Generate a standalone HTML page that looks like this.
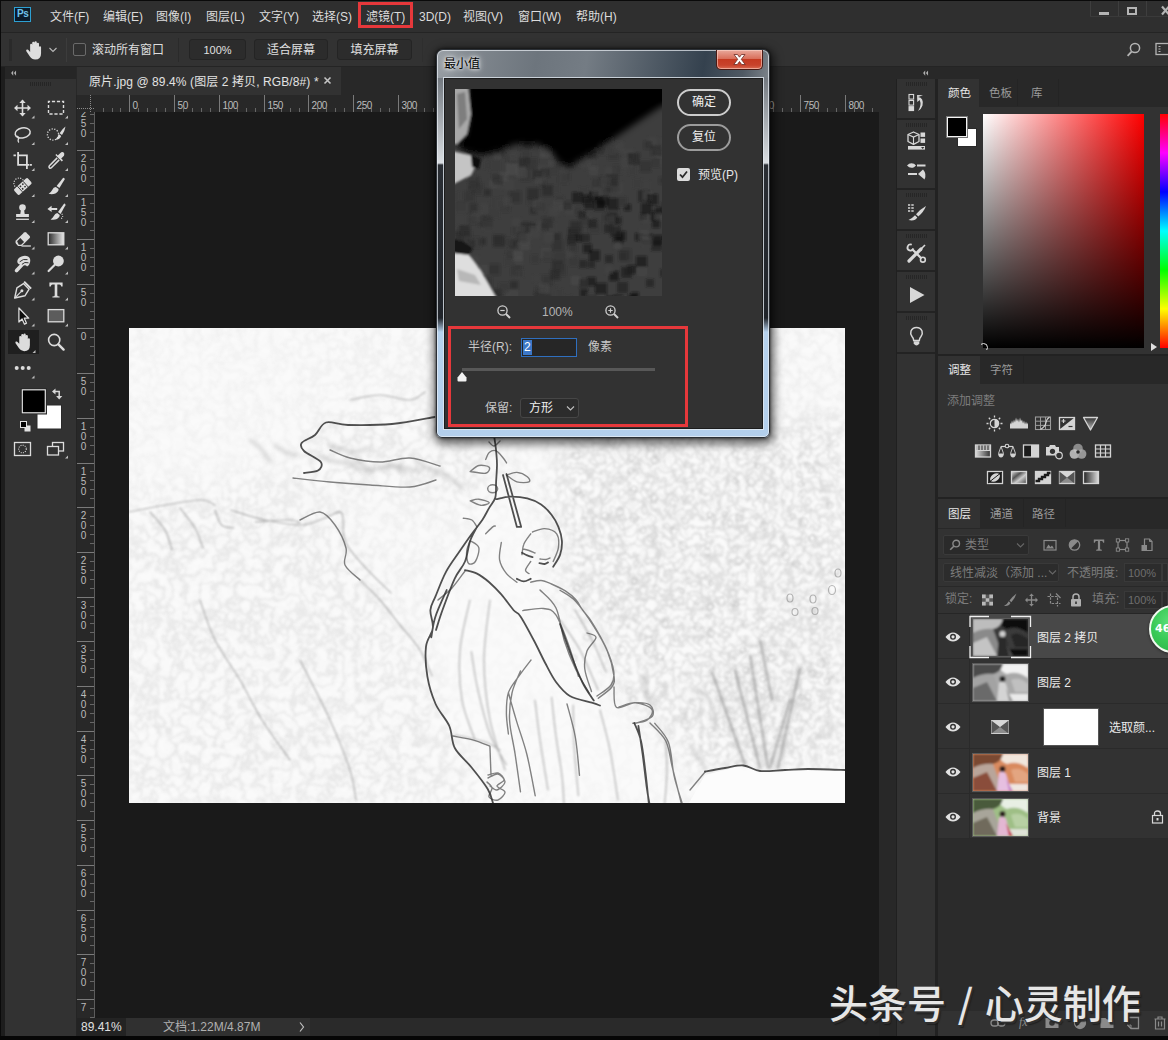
<!DOCTYPE html>
<html lang="zh-CN">
<head>
<meta charset="utf-8">
<title>最小值</title>
<style>
*{box-sizing:border-box;margin:0;padding:0}
html,body{width:1168px;height:1040px;overflow:hidden;background:#242424}
body{position:relative;font-family:"Liberation Sans","Noto Sans CJK SC",sans-serif;font-size:12px;color:#d6d6d6}
.a{position:absolute}
.t{position:absolute;white-space:nowrap;line-height:1}
#menubar{left:1px;top:1px;width:1167px;height:31px;background:#2f2f2f}
#optbar{left:1px;top:33px;width:1167px;height:33px;background:#323232}
#tabrow{left:1px;top:67px;width:1167px;height:28px;background:#282828}
#toolbar{left:5px;top:79px;width:71px;height:957px;background:#323232}
#canvas{left:94px;top:112px;width:785px;height:906px;background:#1a1a1a}
#hruler{left:77px;top:95px;width:802px;height:17px;background:#282828}
#vruler{left:77px;top:112px;width:17px;height:906px;background:#282828}
#status{left:77px;top:1018px;width:802px;height:18px;background:#2a2a2a}
#gapstrip{left:879px;top:95px;width:17px;height:941px;background:#282828}
#iconstrip{left:897px;top:79px;width:38px;height:957px;background:#323232}
#panels{left:938px;top:79px;width:230px;height:957px;background:#323232}
.mi{top:11px;font-size:12px;color:#dcdcdc}
.btn{position:absolute;height:21px;border:1px solid #242424;border-radius:3px;background:#2c2c2c;color:#e0e0e0;font-size:12px;line-height:19px;padding-top:1px;text-align:center;white-space:nowrap}

</style>
</head>
<body>
<!-- app chrome -->
<div class="a" style="left:0;top:0;width:1168px;height:1px;background:#0a0a0a"></div><div class="a" style="left:0;top:0;width:1px;height:1040px;background:#0a0a0a"></div><div class="a" style="left:0;top:1036px;width:1168px;height:4px;background:#060606"></div>
<div class="a" id="menubar"></div>
<div class="a" id="optbar"></div>
<div class="a" id="tabrow"></div>
<div class="a" id="toolbar"></div>
<div class="a" id="hruler"></div>
<div class="a" id="vruler"></div>
<div class="a" id="canvas"></div>
<div class="a" id="status"></div>
<div class="a" id="gapstrip"></div>
<div class="a" id="iconstrip"></div>
<div class="a" id="panels"></div>

<!-- MENU -->
<div class="a" style="left:14px;top:7px;width:17px;height:15px;background:#0b1b2b;border:1px solid #2da0d2"></div>
<span class="t" style="left:17px;top:9px;font-size:10px;font-weight:bold;color:#6fc3ea;letter-spacing:-0.3px">Ps</span>
<div class="a" style="left:1090px;top:1px;width:1px;height:16px;background:#3e3e3e"></div><div class="a" style="left:1118px;top:1px;width:1px;height:16px;background:#3e3e3e"></div><div class="a" style="left:1146px;top:1px;width:1px;height:16px;background:#3e3e3e"></div><div class="a" style="left:1090px;top:16px;width:78px;height:1px;background:#3a3a3a"></div>
<div class="a" style="left:1099px;top:12px;width:10px;height:3px;background:#b4b4b4"></div>
<div class="a" style="left:1127px;top:7px;width:10px;height:8px;border:2px solid #b4b4b4;border-top-width:2px"></div>
<svg class="a" style="left:1160px;top:5px" width="8" height="11" viewBox="0 0 8 11"><path d="M2 1.500L9 9.500M9 1.500L2 9.500" stroke="#b4b4b4" stroke-width="2.200"/></svg>
<div id="menu">
<span class="t mi" style="left:50px">文件(F)</span>
<span class="t mi" style="left:103px">编辑(E)</span>
<span class="t mi" style="left:156px">图像(I)</span>
<span class="t mi" style="left:206px">图层(L)</span>
<span class="t mi" style="left:259px">文字(Y)</span>
<span class="t mi" style="left:312px">选择(S)</span>
<span class="t mi" style="left:366px">滤镜(T)</span>
<span class="t mi" style="left:419px">3D(D)</span>
<span class="t mi" style="left:463px">视图(V)</span>
<span class="t mi" style="left:518px">窗口(W)</span>
<span class="t mi" style="left:576px">帮助(H)</span>
</div>
<div class="a" style="left:358px;top:2px;width:55px;height:26px;border:3px solid #e6383b"></div>
<!--OPT-->
<div id="opt">
<div class="a" style="left:9px;top:39px;width:3px;height:22px;background:#2a2a2a"></div>
<svg class="a" style="left:23px;top:39px" width="23" height="23" viewBox="0 0 20 20"><path d="M6.2 11.2 L6.2 5.2 Q6.2 4.2 7.1 4.2 Q8 4.2 8 5.2 L8 3.4 Q8 2.3 9 2.3 Q10 2.3 10 3.4 L10 3 Q10 2 11 2 Q12 2 12 3 L12 4 Q12 3.2 12.9 3.2 Q13.9 3.2 13.9 4.2 L13.9 7 Q13.9 6.2 14.8 6.2 Q15.7 6.2 15.7 7.2 L15.7 12.5 Q15.7 17.8 10.6 17.8 Q7.6 17.8 6 15.2 L2.9 10.6 Q2.4 9.6 3.3 9.2 Q4.2 8.8 4.9 9.7 Z" fill="#dedede"/></svg>
<svg class="a" style="left:48px;top:46px" width="10" height="8" viewBox="0 0 10 8"><path d="M1.5 2 L5 5.5 L8.5 2" fill="none" stroke="#b8b8b8" stroke-width="1.1"/></svg>
<div class="a" style="left:66px;top:38px;width:1px;height:24px;background:#3c3c3c"></div>
<div class="a" style="left:73px;top:43px;width:13px;height:13px;border:1px solid #6a6a6a;border-radius:2px;background:#303030"></div>
<span class="t" style="left:92px;top:44px;font-size:12px;color:#dedede">滚动所有窗口</span>
<div class="a" style="left:178px;top:38px;width:1px;height:24px;background:#2a2a2a"></div>
<div class="btn" style="left:189px;top:39px;width:57px;font-size:11px">100%</div>
<div class="btn" style="left:254px;top:39px;width:74px">适合屏幕</div>
<div class="btn" style="left:337px;top:39px;width:75px">填充屏幕</div>
<div class="a" style="left:422px;top:38px;width:1px;height:24px;background:#2e2e2e"></div>
<svg class="a" style="left:1125px;top:41px" width="18" height="18" viewBox="0 0 18 18"><circle cx="10" cy="7" r="4.6" fill="none" stroke="#b4b4b4" stroke-width="1.5"/><path d="M6.6 10.6 L2.6 14.8" stroke="#b4b4b4" stroke-width="1.8"/></svg>
<svg class="a" style="left:1155px;top:42px" width="13" height="14" viewBox="0 0 13 14"><rect x="1" y="1.5" width="14" height="11" fill="none" stroke="#b4b4b4" stroke-width="1.3"/><path d="M3.5 4.5h2M3.5 7h2M3.5 9.5h2" stroke="#b4b4b4" stroke-width="1.2"/></svg>
</div>
<!--TAB-->
<div class="a" style="left:77px;top:67px;width:264px;height:28px;background:#323232"></div>
<span class="t" style="left:89px;top:76px;font-size:12px;color:#e2e2e2;letter-spacing:0.1px">原片.jpg @ 89.4% (图层 2 拷贝, RGB/8#) *</span>
<svg class="a" style="left:323px;top:76px" width="9" height="9" viewBox="0 0 9 9"><path d="M1.5 1.500 L7.500 7.500 M7.500 1.500 L1.500 7.500" stroke="#c4c4c4" stroke-width="1.600"/></svg>
<!--TOOLS-->
<div class="a" style="left:1px;top:67px;width:4px;height:969px;background:#1d1d1d"></div>
<div class="a" style="left:5px;top:67px;width:71px;height:12px;background:#262626"></div>
<svg class="a" style="left:10px;top:70px" width="7" height="6" viewBox="0 0 8 8"><path d="M3.6 0.500 L0.800 4 L3.6 7.500Z M7.400 0.500 L4.600 4 L7.400 7.500Z" fill="#b0b0b0" stroke="none"/></svg>
<div class="a" style="left:30px;top:82px;width:22px;height:4px;background:repeating-linear-gradient(90deg,#252525 0 1px,transparent 1px 2px)"></div>
<svg class="a" style="left:0;top:80px" width="77" height="400" viewBox="0 0 77 400">
<defs><linearGradient id="tg" x1="0" x2="1"><stop offset="0" stop-color="#2a2a2a"/><stop offset="1" stop-color="#e8e8e8"/></linearGradient></defs>
<g transform="translate(22.5,28)"><path d="M-7.5 0H7.5M0 -7.5V7.5" stroke="#dcdcdc" stroke-width="1.6" fill="none"/><path d="M-8.5 0L-5 -3.2V3.2ZM8.5 0L5 -3.2V3.2ZM0 -8.5L-3.2 -5H3.2ZM0 8.5L-3.2 5H3.2Z" fill="#dcdcdc"/><path d="M9 10.5 L12 10.5 L12 7.5 Z" fill="#bdbdbd"/></g>
<g transform="translate(56,28)"><rect x="-7.5" y="-6.5" width="15" height="12.5" fill="none" stroke="#dcdcdc" stroke-width="1.4" stroke-dasharray="3.2 1.8" stroke-dashoffset="1.6"/><path d="M9 10.5 L12 10.5 L12 7.5 Z" fill="#bdbdbd"/></g>
<g transform="translate(22.5,54.5)"><ellipse cx="0.5" cy="-1.5" rx="7.6" ry="5" transform="rotate(-12)" fill="none" stroke="#dcdcdc" stroke-width="1.5"/><path d="M-5.5 1.5 Q-3 3 -4.2 5 Q-5 6.8 -3.6 8" fill="none" stroke="#dcdcdc" stroke-width="1.4"/><path d="M9 10.5 L12 10.5 L12 7.5 Z" fill="#bdbdbd"/></g>
<g transform="translate(56,54.5)"><circle cx="-3" cy="0" r="5.6" fill="none" stroke="#dcdcdc" stroke-width="1.3" stroke-dasharray="1.2 1.5"/><path d="M9.5 -8 Q6 -5.5 3.6 -1.2 L6 0.6 Q8.8 -3.5 9.5 -8Z" fill="#dcdcdc"/><path d="M2.9 -0.3 L5.2 1.5 Q4 5.4 -0.8 5.2 Q1.6 3.4 2.9 -0.3Z" fill="#dcdcdc"/><path d="M9 10.5 L12 10.5 L12 7.5 Z" fill="#bdbdbd"/></g>
<g transform="translate(22.5,80.5)"><path d="M-9 -5.2H-6.6M-4.4 -8.5V4.4H6.8M-4.4 -5.2H4.4V8.4M7.4 4.4H9.4" fill="none" stroke="#dcdcdc" stroke-width="1.8"/><path d="M9 10.5 L12 10.5 L12 7.5 Z" fill="#bdbdbd"/></g>
<g transform="translate(56,80.5)"><path d="M1.2 -2.6 L-6.6 5.2 Q-7.6 6.6 -6.6 7.4 Q-5.6 8.2 -4.4 7 L3.2 -0.6" fill="none" stroke="#dcdcdc" stroke-width="1.5"/><path d="M-0.6 -5.4 L5.8 1 L7 -0.2 L5.2 -2 L8 -4.8 Q9 -7 7.4 -8.2 Q5.8 -9 4.4 -7.6 L1.8 -5 L0.4 -6.4Z" fill="#dcdcdc"/><path d="M9 10.5 L12 10.5 L12 7.5 Z" fill="#bdbdbd"/></g>
<g transform="translate(22.5,106.5)"><circle cx="-3.4" cy="-3.2" r="5.2" fill="none" stroke="#dcdcdc" stroke-width="1.2" stroke-dasharray="1.1 1.4"/><g transform="rotate(-42)"><rect x="-9" y="-3.6" width="18.5" height="7.6" rx="1.6" fill="#dcdcdc"/><rect x="-3.3" y="-3.6" width="7" height="7.6" fill="#323232" opacity="0.0"/><path d="M-3.6 -3.6V4M3.9 -3.6V4" stroke="#323232" stroke-width="0.9"/><circle cx="-1.4" cy="-1.5" r="0.9" fill="#323232"/><circle cx="1.8" cy="-1.5" r="0.9" fill="#323232"/><circle cx="-1.4" cy="1.8" r="0.9" fill="#323232"/><circle cx="1.8" cy="1.8" r="0.9" fill="#323232"/></g><path d="M9 10.5 L12 10.5 L12 7.5 Z" fill="#bdbdbd"/></g>
<g transform="translate(56,106.5)"><path d="M8.2 -8.6 Q8.9 -8 8.6 -7 L3.4 1.6 L0.6 -0.4 L7 -8.4 Q7.6 -9 8.2 -8.6Z" fill="#dcdcdc"/><path d="M-0.2 0.6 L2.6 2.6 Q2.6 5.6 -0.6 7 Q-4 8.200 -7.4 7.2 Q-4.8 5.8 -3.8 3.6 Q-2.6 0.8 -0.2 0.6Z" fill="#dcdcdc"/><path d="M9 10.5 L12 10.5 L12 7.5 Z" fill="#bdbdbd"/></g>
<g transform="translate(22.5,132.5)"><circle cx="0" cy="-5" r="3.3" fill="#dcdcdc"/><path d="M-1.6 -2.4H1.6L2.2 1.4H6.4V4.6H-6.4V1.4H-2.2Z" fill="#dcdcdc"/><path d="M-6.4 6.8H6.4" stroke="#dcdcdc" stroke-width="1.3"/><path d="M9 10.5 L12 10.5 L12 7.5 Z" fill="#bdbdbd"/></g>
<g transform="translate(56,132.5)"><path d="M9 -8.8 Q9.700 -8.2 9.400 -7.2 L4.6 1.4 L2 -0.4 L7.8 -8.6 Q8.4 -9.2 9 -8.8Z" fill="#dcdcdc"/><path d="M1.2 0.6 L3.8 2.4 Q3.8 5.2 1 6.600 Q-2 7.800 -5.400 7 Q-3 5.600 -2.200 3.600 Q-1 1 1.200 0.600Z" fill="#dcdcdc"/><path d="M-8.6 -3.4 L-4.4 -6.8 V-4.6 H1.2 V-2.6 H-4.4 V-0.4Z" fill="#dcdcdc"/><path d="M5.8 1.2 Q8 4.6 4.6 6.6" fill="none" stroke="#dcdcdc" stroke-width="1.1" stroke-dasharray="1 1.3"/><path d="M9 10.5 L12 10.5 L12 7.5 Z" fill="#bdbdbd"/></g>
<g transform="translate(22.5,159)"><path d="M-6.6 1.6 L1.6 -6.6 Q2.6 -7.4 3.6 -6.6 L7.2 -3 Q8 -2 7.2 -1 L-0.8 7 H-4.4 L-6.6 4.6 Q-7.6 3 -6.6 1.6Z" fill="#dcdcdc"/><path d="M-5.4 2.2 L-2.2 -0.9 L1.6 2.9 L-1.4 5.8 H-3.8Z" fill="#323232"/><path d="M-1 7H8.4" stroke="#dcdcdc" stroke-width="1.3"/><path d="M9 10.5 L12 10.5 L12 7.5 Z" fill="#bdbdbd"/></g>
<g transform="translate(56,159)"><rect x="-7.8" y="-6.2" width="15.6" height="12" fill="url(#tg)" stroke="#dcdcdc" stroke-width="1.3"/><path d="M9 10.5 L12 10.5 L12 7.5 Z" fill="#bdbdbd"/></g>
<g transform="translate(22.5,184)"><path d="M-1 -7.4 Q2.6 -9 5.6 -7.4 Q8.4 -5.6 7.6 -2 Q7 1.4 4.6 2.6 Q3 0.6 1.2 1.6 L-4.8 8 Q-6.6 9 -7.6 7.6 Q-8.2 6.2 -7 5 L-2.6 0.4 Q-5.4 -0.4 -5.2 -3 Q-4.6 -6 -1 -7.4Z" fill="#dcdcdc"/><path d="M-2.8 -2.2 Q0.6 -5.6 5 -4.4" fill="none" stroke="#323232" stroke-width="1"/><path d="M-0.6 0.4 Q2 -2.6 6 -1.2" fill="none" stroke="#323232" stroke-width="1"/><path d="M9 10.5 L12 10.5 L12 7.5 Z" fill="#bdbdbd"/></g>
<g transform="translate(56,184)"><circle cx="2.4" cy="-3" r="5.4" fill="#dcdcdc"/><path d="M-1.2 0.8 L-7.4 7" stroke="#dcdcdc" stroke-width="2.2" stroke-linecap="round"/><path d="M9 10.5 L12 10.5 L12 7.5 Z" fill="#bdbdbd"/></g>
<g transform="translate(22.5,210)"><path d="M-7.8 8 L-5.6 -2.2 L1 -6.4 L6.6 -0.8 L2.4 5.8Z" fill="none" stroke="#dcdcdc" stroke-width="1.4" stroke-linejoin="round"/><path d="M-7.6 7.8 L-1.4 1.6" stroke="#dcdcdc" stroke-width="1.2"/><circle cx="-0.6" cy="0.8" r="1.5" fill="#dcdcdc"/><path d="M1.6 -8.4 L8.6 -1.4" stroke="#dcdcdc" stroke-width="2"/><path d="M9 10.5 L12 10.5 L12 7.5 Z" fill="#bdbdbd"/></g>
<g transform="translate(56,210)"><path d="M-6.6 -7.6H6.6V-3.4H5.2Q5 -5.6 3.4 -5.6H1.3V5.4Q1.3 6.4 3.6 6.4V7.6H-3.6V6.4Q-1.3 6.4 -1.3 5.4V-5.6H-3.4Q-5 -5.6 -5.2 -3.4H-6.6Z" fill="#dcdcdc"/><path d="M9 10.5 L12 10.5 L12 7.5 Z" fill="#bdbdbd"/></g>
<g transform="translate(22.5,236)"><path d="M-3.6 -8 V6 L-0.4 3 L2 8.2 L4 7.2 L1.8 2.2 H6.2Z" fill="#0c0c0c" stroke="#dcdcdc" stroke-width="1.3" stroke-linejoin="round"/><path d="M9 10.5 L12 10.5 L12 7.5 Z" fill="#bdbdbd"/></g>
<g transform="translate(56,236)"><rect x="-7.8" y="-6.4" width="15.6" height="12.2" fill="#5c5c5c" stroke="#dcdcdc" stroke-width="1.3"/><path d="M9 10.5 L12 10.5 L12 7.5 Z" fill="#bdbdbd"/></g>
<rect x="8" y="250" width="31" height="24" fill="#1f1f1f"/>
<g transform="translate(23.5,262.5)"><path d="M-3.8 1.2 L-3.8 -4.8 Q-3.8 -5.8 -2.9 -5.8 Q-2 -5.8 -2 -4.8 L-2 -6.6 Q-2 -7.7 -1 -7.7 Q0 -7.7 0 -6.6 L0 -7 Q0 -8 1 -8 Q2 -8 2 -7 L2 -6 Q2 -6.8 2.9 -6.8 Q3.9 -6.8 3.9 -5.8 L3.9 -3 Q3.9 -3.8 4.8 -3.8 Q5.7 -3.8 5.7 -2.8 L5.7 2.5 Q5.7 7.8 0.6 7.8 Q-2.4 7.8 -4 5.2 L-7.1 0.6 Q-7.6 -0.4 -6.7 -0.8 Q-5.8 -1.2 -5.1 -0.3 Z" fill="#dcdcdc" transform="scale(1.12)"/><path d="M9 10.5 L12 10.5 L12 7.5 Z" fill="#bdbdbd"/></g>
<g transform="translate(56,262)"><circle cx="-1.8" cy="-2" r="5.6" fill="none" stroke="#dcdcdc" stroke-width="1.6"/><path d="M2.4 2.4 L7.6 7.6" stroke="#dcdcdc" stroke-width="2.4" stroke-linecap="round"/></g>
<g transform="translate(22.5,288)"><circle cx="-5.8" cy="0" r="2" fill="#dcdcdc"/><circle cx="0.2" cy="0" r="2" fill="#dcdcdc"/><circle cx="6.2" cy="0" r="2" fill="#dcdcdc"/><path d="M9 10.5 L12 10.5 L12 7.5 Z" fill="#bdbdbd"/></g>

<!-- fg/bg swatches -->
<rect x="37" y="325" width="24.5" height="24" fill="#fff" stroke="#2a2a2a" stroke-width="1"/>
<rect x="21" y="308.500" width="25.500" height="25.500" fill="#000" stroke="#2a2a2a" stroke-width="1"/>
<rect x="22.300" y="309.800" width="23" height="23" fill="#000" stroke="#e6e6e6" stroke-width="1.2"/>
<path d="M53.500 311.500 H59.200 V317" fill="none" stroke="#d8d8d8" stroke-width="1.500"/><path d="M52 311.500 L55.500 308.400 V314.600ZM59.200 319.600 L56.100 316 H62.300Z" fill="#d8d8d8"/>
<rect x="24.500" y="345.500" width="6" height="6" fill="#e0e0e0"/><rect x="20.500" y="341.500" width="6" height="6" fill="#000" stroke="#e0e0e0" stroke-width="1"/>
<rect x="14.500" y="362.500" width="16" height="13" fill="none" stroke="#dcdcdc" stroke-width="1.300"/><circle cx="22.500" cy="369" r="3.800" fill="none" stroke="#dcdcdc" stroke-width="1.100" stroke-dasharray="1 1.200"/>
<rect x="52.500" y="362.500" width="11" height="8.500" fill="none" stroke="#dcdcdc" stroke-width="1.300"/><rect x="47.500" y="366.500" width="11" height="8.500" fill="#323232" stroke="#dcdcdc" stroke-width="1.300"/><path d="M65 378.500 L68 378.500 L68 375.500Z" fill="#bdbdbd"/>
</svg>
<!--RULERS-->
<svg class="a" style="left:77px;top:95px" width="802" height="17" viewBox="0 0 802 17" font-family="Liberation Sans, sans-serif" font-size="10" letter-spacing="-0.4" fill="#bcbcbc">
<path d="M26.5 13V17M35.5 13V17M43.5 13V17M61.5 13V17M70.5 13V17M79.5 13V17M88.5 13V17M106.5 13V17M115.5 13V17M124.5 13V17M133.5 13V17M151.5 13V17M160.5 13V17M169.5 13V17M178.5 13V17M195.5 13V17M204.5 13V17M213.5 13V17M222.5 13V17M240.5 13V17M249.5 13V17M258.5 13V17M267.5 13V17M285.5 13V17M294.5 13V17M303.5 13V17M312.5 13V17M330.5 13V17M339.5 13V17M347.5 13V17M356.5 13V17M374.5 13V17M383.5 13V17M392.5 13V17M401.5 13V17M419.5 13V17M428.5 13V17M437.5 13V17M446.5 13V17M464.5 13V17M473.5 13V17M482.5 13V17M491.5 13V17M508.5 13V17M517.5 13V17M526.5 13V17M535.5 13V17M553.5 13V17M562.5 13V17M571.5 13V17M580.5 13V17M598.5 13V17M607.5 13V17M616.5 13V17M625.5 13V17M643.5 13V17M651.5 13V17M660.5 13V17M669.5 13V17M687.5 13V17M696.5 13V17M705.5 13V17M714.5 13V17M732.5 13V17M741.5 13V17M750.5 13V17M759.5 13V17M777.5 13V17M786.5 13V17M795.5 13V17" stroke="#666" stroke-width="1"/>
<path d="M52.5 0V17M97.5 0V17M142.5 0V17M187.5 0V17M231.5 0V17M276.5 0V17M321.5 0V17M365.5 0V17M410.5 0V17M455.5 0V17M499.5 0V17M544.5 0V17M589.5 0V17M634.5 0V17M678.5 0V17M723.5 0V17M768.5 0V17" stroke="#7a7a7a" stroke-width="1"/>
<text x="55.5" y="14">0</text>
<text x="100.5" y="14">50</text>
<text x="145.5" y="14">100</text>
<text x="190.5" y="14">150</text>
<text x="234.5" y="14">200</text>
<text x="279.5" y="14">250</text>
<text x="324.5" y="14">300</text>
<text x="368.5" y="14">350</text>
<text x="413.5" y="14">400</text>
<text x="458.5" y="14">450</text>
<text x="502.5" y="14">500</text>
<text x="547.5" y="14">550</text>
<text x="592.5" y="14">600</text>
<text x="637.5" y="14">650</text>
<text x="681.5" y="14">700</text>
<text x="726.5" y="14">750</text>
<text x="771.5" y="14">800</text>
<path d="M0 13.500H17 M13.500 0V17" stroke="#8a8a8a" stroke-width="1" stroke-dasharray="1 1"/>
</svg>
<svg class="a" style="left:77px;top:112px" width="17" height="906" viewBox="0 0 17 906" font-family="Liberation Sans, sans-serif" font-size="10" fill="#bcbcbc" text-anchor="middle">
<path d="M13 2.5H17M13 11.5H17M13 20.5H17M13 29.5H17M13 47.5H17M13 55.5H17M13 64.5H17M13 73.5H17M13 91.5H17M13 100.5H17M13 109.5H17M13 118.5H17M13 136.5H17M13 145.5H17M13 154.5H17M13 163.5H17M13 181.5H17M13 190.5H17M13 199.5H17M13 207.5H17M13 225.5H17M13 234.5H17M13 243.5H17M13 252.5H17M13 270.5H17M13 279.5H17M13 288.5H17M13 297.5H17M13 315.5H17M13 324.5H17M13 333.5H17M13 342.5H17M13 359.5H17M13 368.5H17M13 377.5H17M13 386.5H17M13 404.5H17M13 413.5H17M13 422.5H17M13 431.5H17M13 449.5H17M13 458.5H17M13 467.5H17M13 476.5H17M13 494.5H17M13 503.5H17M13 511.5H17M13 520.5H17M13 538.5H17M13 547.5H17M13 556.5H17M13 565.5H17M13 583.5H17M13 592.5H17M13 601.5H17M13 610.5H17M13 628.5H17M13 637.5H17M13 646.5H17M13 655.5H17M13 672.5H17M13 681.5H17M13 690.5H17M13 699.5H17M13 717.5H17M13 726.5H17M13 735.5H17M13 744.5H17M13 762.5H17M13 771.5H17M13 780.5H17M13 789.5H17M13 807.5H17M13 815.5H17M13 824.5H17M13 833.5H17M13 851.5H17M13 860.5H17M13 869.5H17M13 878.5H17M13 896.5H17M13 905.5H17" stroke="#666" stroke-width="1"/>
<path d="M0 38.5H17M0 82.5H17M0 127.5H17M0 172.5H17M0 216.5H17M0 261.5H17M0 306.5H17M0 351.5H17M0 395.5H17M0 440.5H17M0 485.5H17M0 529.5H17M0 574.5H17M0 619.5H17M0 663.5H17M0 708.5H17M0 753.5H17M0 798.5H17M0 842.5H17M0 887.5H17" stroke="#7a7a7a" stroke-width="1"/>
<text x="6.500" y="4.5">2</text>
<text x="6.500" y="14.5">5</text>
<text x="6.500" y="24.5">0</text>
<text x="6.500" y="49.5">2</text>
<text x="6.500" y="59.5">0</text>
<text x="6.500" y="69.5">0</text>
<text x="6.500" y="93.5">1</text>
<text x="6.500" y="103.5">5</text>
<text x="6.500" y="113.5">0</text>
<text x="6.500" y="138.5">1</text>
<text x="6.500" y="148.5">0</text>
<text x="6.500" y="158.5">0</text>
<text x="6.500" y="183.5">5</text>
<text x="6.500" y="193.5">0</text>
<text x="6.500" y="227.5">0</text>
<text x="6.500" y="272.5">5</text>
<text x="6.500" y="282.5">0</text>
<text x="6.500" y="317.5">1</text>
<text x="6.500" y="327.5">0</text>
<text x="6.500" y="337.5">0</text>
<text x="6.500" y="362.5">1</text>
<text x="6.500" y="372.5">5</text>
<text x="6.500" y="382.5">0</text>
<text x="6.500" y="406.5">2</text>
<text x="6.500" y="416.5">0</text>
<text x="6.500" y="426.5">0</text>
<text x="6.500" y="451.5">2</text>
<text x="6.500" y="461.5">5</text>
<text x="6.500" y="471.5">0</text>
<text x="6.500" y="496.5">3</text>
<text x="6.500" y="506.5">0</text>
<text x="6.500" y="516.5">0</text>
<text x="6.500" y="540.5">3</text>
<text x="6.500" y="550.5">5</text>
<text x="6.500" y="560.5">0</text>
<text x="6.500" y="585.5">4</text>
<text x="6.500" y="595.5">0</text>
<text x="6.500" y="605.5">0</text>
<text x="6.500" y="630.5">4</text>
<text x="6.500" y="640.5">5</text>
<text x="6.500" y="650.5">0</text>
<text x="6.500" y="674.5">5</text>
<text x="6.500" y="684.5">0</text>
<text x="6.500" y="694.5">0</text>
<text x="6.500" y="719.5">5</text>
<text x="6.500" y="729.5">5</text>
<text x="6.500" y="739.5">0</text>
<text x="6.500" y="764.5">6</text>
<text x="6.500" y="774.5">0</text>
<text x="6.500" y="784.5">0</text>
<text x="6.500" y="809.5">6</text>
<text x="6.500" y="819.5">5</text>
<text x="6.500" y="829.5">0</text>
<text x="6.500" y="853.5">7</text>
<text x="6.500" y="863.5">0</text>
<text x="6.500" y="873.5">0</text>
<text x="6.500" y="898.5">7</text>
</svg>
<div class="a" style="left:94px;top:112px;width:1px;height:906px;background:#5c5c5c"></div>
<!--IMAGE-->
<!--IMG0--><svg class="a" id="img" style="left:129px;top:328px" width="716" height="475" viewBox="0 0 716 475">
<defs>
<filter id="sk1" x="0" y="0" width="100%" height="100%" color-interpolation-filters="sRGB"><feTurbulence type="fractalNoise" baseFrequency="0.070" numOctaves="3" seed="4"/><feColorMatrix values="0 0 0 0 0.350 0 0 0 0 0.350 0 0 0 0 0.350 1 0 0 0 0"/><feComponentTransfer><feFuncA type="table" tableValues="0 0 0 0 0 0.100 0.500 0.100 0 0 0 0 0"/></feComponentTransfer><feGaussianBlur stdDeviation="1"/></filter>
<filter id="sk2" x="0" y="0" width="100%" height="100%" color-interpolation-filters="sRGB"><feTurbulence type="fractalNoise" baseFrequency="0.110" numOctaves="2" seed="11"/><feColorMatrix values="0 0 0 0 0.400 0 0 0 0 0.400 0 0 0 0 0.400 0 1 0 0 0"/><feComponentTransfer><feFuncA type="table" tableValues="0 0 0 0 0 0.080 0.400 0.080 0 0 0 0 0"/></feComponentTransfer><feGaussianBlur stdDeviation="1.100"/></filter>
<filter id="sb" x="-2%" y="-2%" width="104%" height="104%"><feGaussianBlur stdDeviation="0.600"/></filter><filter id="sb2" x="-2%" y="-2%" width="104%" height="104%"><feGaussianBlur stdDeviation="0.800"/></filter>
<filter id="sb3" x="-5%" y="-5%" width="110%" height="110%"><feGaussianBlur stdDeviation="2.200"/></filter>
<filter id="mb" x="-10%" y="-10%" width="120%" height="120%"><feGaussianBlur stdDeviation="14"/></filter>
<mask id="mA"><rect width="716" height="475" fill="#6a6a6a"/><g filter="url(#mb)"><path d="M0 177 L86 170 L171 144 L216 192 L251 272 L303 352 L326 422 L361 475 L0 475Z" fill="#c8c8c8"/><path d="M167 97 L311 84 L371 112 L351 172 L171 154Z" fill="#d0d0d0"/><path d="M361 174 L338 211 L310 258 L302 283 L297 319 L298 349 L307 376 L320 398 L326 420 L342 439 L364 475 L553 475 L545 447 L539 414 L523 382 L485 343 L476 318 L463 294 L436 266 L423 238 L433 211 L419 182 L386 170Z" fill="#2c2c2c"/><rect x="0" y="0" width="180" height="150" fill="#4a4a4a"/></g></mask>
<mask id="mC"><rect width="716" height="475" fill="#202020"/><g filter="url(#mb)"><path d="M431 112 L716 92 L716 442 L571 442 L531 392 L491 342 L471 292 L441 262 L436 212 L426 177Z" fill="#fff"/><path d="M361 174 L338 211 L310 258 L302 283 L297 319 L298 349 L307 376 L320 398 L326 420 L342 439 L364 475 L553 475 L545 447 L539 414 L523 382 L485 343 L476 318 L463 294 L436 266 L423 238 L433 211 L419 182 L386 170Z" fill="#000"/></g></mask>
</defs>
<rect width="716" height="475" fill="#fafafa"/>
<g mask="url(#mA)" opacity="0.280"><rect width="716" height="475" filter="url(#sk1)"/></g>
<g mask="url(#mC)" opacity="0.480"><rect width="716" height="475" filter="url(#sk2)"/></g>
<path d="M576 447 L615 437 L632 443 L716 441 V475 H560Z" fill="#fcfcfc"/>
<g fill="none" stroke="#a8a8a8" stroke-width="1.100" opacity="0.400" filter="url(#sb2)"><circle cx="505" cy="253" r="2.9"/><circle cx="604" cy="275" r="2.3"/><circle cx="445" cy="330" r="2.7"/><circle cx="504" cy="371" r="3.0"/><circle cx="667" cy="236" r="3.4"/><circle cx="482" cy="277" r="3.8"/><circle cx="582" cy="305" r="3.4"/><circle cx="458" cy="309" r="3.3"/><circle cx="522" cy="120" r="3.8"/><circle cx="569" cy="299" r="3.8"/><circle cx="634" cy="351" r="2.9"/><circle cx="657" cy="228" r="3.9"/><circle cx="678" cy="137" r="2.4"/><circle cx="500" cy="363" r="3.0"/><circle cx="610" cy="190" r="3.1"/><circle cx="545" cy="203" r="3.3"/><circle cx="599" cy="347" r="3.4"/><circle cx="692" cy="335" r="4.0"/><circle cx="622" cy="154" r="3.7"/><circle cx="701" cy="347" r="3.2"/><circle cx="634" cy="167" r="3.7"/><circle cx="596" cy="186" r="2.3"/><circle cx="672" cy="369" r="2.4"/><circle cx="657" cy="219" r="2.5"/><circle cx="520" cy="312" r="3.8"/><circle cx="453" cy="272" r="2.3"/><circle cx="635" cy="198" r="3.8"/><circle cx="706" cy="243" r="4.0"/><circle cx="525" cy="132" r="3.3"/><circle cx="449" cy="163" r="2.9"/><circle cx="606" cy="153" r="2.3"/><circle cx="675" cy="194" r="3.9"/><circle cx="683" cy="210" r="3.0"/><circle cx="581" cy="279" r="3.3"/><circle cx="592" cy="273" r="3.9"/><circle cx="578" cy="224" r="3.5"/><circle cx="505" cy="190" r="4.0"/><circle cx="582" cy="255" r="2.2"/><circle cx="553" cy="263" r="2.2"/><circle cx="607" cy="276" r="2.3"/><circle cx="610" cy="233" r="3.4"/><circle cx="536" cy="296" r="3.5"/><circle cx="447" cy="128" r="3.4"/><circle cx="701" cy="177" r="3.0"/><circle cx="601" cy="195" r="2.9"/><circle cx="525" cy="208" r="3.3"/><circle cx="522" cy="210" r="3.6"/><circle cx="448" cy="260" r="3.5"/><circle cx="525" cy="170" r="3.6"/><circle cx="505" cy="161" r="3.0"/><circle cx="629" cy="138" r="2.8"/><circle cx="531" cy="329" r="3.0"/><circle cx="672" cy="156" r="2.8"/><circle cx="617" cy="342" r="3.0"/><circle cx="502" cy="143" r="3.2"/><circle cx="493" cy="322" r="3.7"/><circle cx="491" cy="184" r="3.7"/><circle cx="614" cy="322" r="2.8"/><circle cx="476" cy="188" r="3.6"/><circle cx="514" cy="202" r="3.0"/><circle cx="554" cy="218" r="3.9"/><circle cx="483" cy="113" r="3.9"/><circle cx="679" cy="369" r="3.0"/><circle cx="698" cy="353" r="2.6"/><circle cx="642" cy="330" r="3.4"/><circle cx="581" cy="187" r="2.8"/><circle cx="502" cy="130" r="3.3"/><circle cx="518" cy="323" r="2.3"/><circle cx="685" cy="292" r="3.9"/><circle cx="683" cy="346" r="3.2"/></g>
<g fill="none" stroke="#8a8a8a" stroke-width="1.200" opacity="0.600" filter="url(#sb)"><ellipse cx="661" cy="270" rx="3" ry="4"/><ellipse cx="684" cy="271" rx="3" ry="4"/><ellipse cx="703" cy="262" rx="3.5" ry="4.5"/><ellipse cx="666" cy="284" rx="3" ry="3.5"/><ellipse cx="686" cy="283" rx="3" ry="3.5"/><ellipse cx="709" cy="245" rx="3" ry="4"/><ellipse cx="721" cy="244" rx="2.5" ry="3.5"/></g>
<g fill="none" stroke="#9a9a9a" stroke-width="2.600" stroke-linecap="round" filter="url(#sb3)" opacity="0.500"><path d="M308.0 142.0C310.2 143.3 316.7 147.0 321.0 150.0C325.3 153.0 331.8 158.3 334.0 160.0M201.0 117.0C204.7 118.2 216.7 123.5 223.0 124.0C229.3 124.5 236.3 120.7 239.0 120.0M216.0 134.0C219.3 135.3 227.7 141.3 236.0 142.0C244.3 142.7 256.8 137.7 266.0 138.0C275.2 138.3 286.8 143.0 291.0 144.0M583.0 344.0L616.0 437.0M606.0 342.0L631.0 440.0M621.0 327.0L639.0 440.0M671.0 340.0L649.0 440.0M661.0 372.0L641.0 440.0M631.0 312.0L643.0 372.0M514.3 347.8C515.0 351.2 517.3 363.5 518.8 368.0C520.3 372.5 522.5 373.7 523.3 374.8M571.0 362.0C573.0 364.5 580.3 370.3 583.0 377.0C585.7 383.7 586.3 397.8 587.0 402.0M561.0 417.0C562.7 419.5 568.3 427.8 571.0 432.0C573.7 436.2 576.0 440.3 577.0 442.0M191.0 129.0C193.2 129.7 199.8 132.0 204.0 133.0C208.2 134.0 214.0 134.7 216.0 135.0M228.0 132.0C229.5 133.2 234.5 136.8 237.0 139.0C239.5 141.2 242.0 144.0 243.0 145.0M259.0 135.0C260.7 136.0 266.0 139.3 269.0 141.0C272.0 142.7 275.7 144.3 277.0 145.0M286.0 132.0C288.0 133.3 294.3 137.8 298.0 140.0C301.7 142.2 306.3 144.2 308.0 145.0M121.0 112.0C123.0 113.7 129.7 118.3 133.0 122.0C136.3 125.7 139.7 132.0 141.0 134.0M146.0 117.0C147.7 118.2 152.5 122.3 156.0 124.0C159.5 125.7 165.2 126.5 167.0 127.0"/></g>
<g fill="none" stroke="#808080" stroke-width="1.200" stroke-linecap="round" filter="url(#sb2)" opacity="0.600"><path d="M341.0 272.0C339.3 280.3 332.3 305.3 331.0 322.0C329.7 338.7 330.5 357.0 333.0 372.0C335.5 387.0 343.8 405.3 346.0 412.0M361.0 272.0C360.0 282.0 355.0 312.0 355.0 332.0C355.0 352.0 357.5 373.7 361.0 392.0C364.5 410.3 373.5 433.7 376.0 442.0M406.0 372.0C406.8 378.7 408.8 397.0 411.0 412.0C413.2 427.0 417.7 453.7 419.0 462.0M471.0 382.0C472.7 388.7 478.0 407.0 481.0 422.0C484.0 437.0 487.7 463.7 489.0 472.0M431.0 292.0C434.3 297.0 444.7 310.3 451.0 322.0C457.3 333.7 466.0 355.3 469.0 362.0M446.0 282.0C448.8 287.0 457.8 301.7 463.0 312.0C468.2 322.3 474.7 338.7 477.0 344.0M326.0 407.0C331.0 408.2 348.5 411.5 356.0 414.0C363.5 416.5 368.5 420.7 371.0 422.0M0.0 184.0C5.2 183.0 19.2 180.0 31.0 178.0C42.8 176.0 61.8 172.2 71.0 172.0C80.2 171.8 83.5 176.2 86.0 177.0M21.0 184.0C23.5 187.0 32.3 195.7 36.0 202.0C39.7 208.3 41.8 218.7 43.0 222.0M51.0 180.0C53.5 183.3 62.2 193.3 66.0 200.0C69.8 206.7 72.7 216.7 74.0 220.0M126.0 194.0C131.8 193.7 153.5 191.8 161.0 192.0C168.5 192.2 169.3 194.5 171.0 195.0M231.0 252.0C234.3 255.3 244.3 264.5 251.0 272.0C257.7 279.5 264.3 288.7 271.0 297.0C277.7 305.3 285.7 313.5 291.0 322.0C296.3 330.5 301.0 343.7 303.0 348.0M71.0 272.0C73.5 278.7 79.3 298.7 86.0 312.0C92.7 325.3 103.2 338.7 111.0 352.0C118.8 365.3 124.7 378.7 133.0 392.0C141.3 405.3 156.3 425.3 161.0 432.0M171.0 332.0C176.0 342.0 192.7 373.7 201.0 392.0C209.3 410.3 216.7 428.7 221.0 442.0C225.3 455.3 226.0 467.0 227.0 472.0M583.0 344.0L616.0 437.0M606.0 342.0L631.0 440.0M621.0 327.0L639.0 440.0M671.0 340.0L649.0 440.0M661.0 372.0L641.0 440.0M631.0 312.0L643.0 372.0M342.4 323.7C343.4 329.9 345.5 347.0 348.6 360.7C351.7 374.4 356.1 393.3 360.9 406.0C365.7 418.7 374.6 431.7 377.4 436.8M422.6 369.0C423.3 375.2 425.0 393.0 426.7 406.0C428.4 419.0 431.5 435.5 432.9 447.1C434.3 458.8 434.6 471.1 435.0 475.9M444.2 377.2C444.4 384.1 444.3 403.2 445.2 418.3C446.1 433.4 448.7 459.5 449.4 467.7M536.8 413.0C537.0 418.2 538.1 434.0 537.9 444.5C537.7 455.0 536.0 470.8 535.6 476.0M101.7 182.0C107.4 183.7 124.2 189.5 136.0 192.0C147.8 194.5 162.6 197.3 172.6 197.0C182.6 196.7 189.3 192.0 196.0 190.0C202.7 188.0 209.4 181.2 212.7 185.0C216.0 188.8 212.2 204.0 215.8 212.7C219.4 221.4 226.6 228.7 234.3 237.4C242.0 246.1 257.4 260.4 262.0 265.0M86.0 182.0C87.1 184.5 89.3 194.0 92.5 197.0C95.7 200.0 102.9 199.5 105.0 200.0M221.0 72.0C226.0 71.2 241.0 67.0 251.0 67.0C261.0 67.0 273.5 72.5 281.0 72.0C288.5 71.5 293.5 65.3 296.0 64.0"/></g>
<g fill="none" stroke="#5a5a5a" stroke-width="1.400" stroke-linecap="round" filter="url(#sb)" opacity="0.750"><path d="M401.7 205.8C400.6 207.5 396.2 212.7 394.8 216.2C393.3 219.7 393.3 224.9 393.0 226.6M403.5 204.0C405.5 203.4 411.6 200.3 415.6 200.6C419.6 200.9 425.4 202.6 427.7 205.8C430.0 209.0 430.0 215.0 429.4 219.6C428.8 224.2 425.1 231.2 424.2 233.5M394.0 221.0C395.0 221.2 398.0 221.8 400.0 222.5C402.0 223.2 405.0 224.6 406.0 225.0M411.0 231.0C412.0 231.1 415.3 231.7 417.0 231.5C418.7 231.3 420.3 230.2 421.0 230.0M401.7 233.5C400.8 234.9 396.8 240.1 396.5 242.1C396.2 244.1 399.4 245.0 400.0 245.6M372.3 214.5C372.0 217.4 369.7 226.6 370.6 231.8C371.5 237.0 374.6 241.9 377.5 245.6C380.4 249.3 386.2 252.8 387.9 254.2M401.7 254.2C403.4 253.9 408.6 252.2 412.1 252.5C415.6 252.8 418.5 254.3 422.5 256.0C426.5 257.7 432.3 260.3 436.3 262.9C440.3 265.5 443.8 268.3 446.7 271.5C449.6 274.7 450.9 278.2 453.6 282.0C456.3 285.8 459.0 287.9 462.8 294.0C466.6 300.1 472.8 310.4 476.5 318.6C480.2 326.8 483.8 336.6 484.7 343.0C485.6 349.4 484.8 352.8 482.0 357.0C479.2 361.2 470.3 366.2 468.0 368.0M341.2 143.5C342.6 142.5 346.6 138.2 349.8 137.5C353.0 136.8 359.1 137.9 360.2 139.2C361.3 140.5 359.9 144.6 356.7 145.3C353.5 146.0 343.8 143.8 341.2 143.5M377.5 147.0C379.2 146.6 384.4 144.1 387.9 144.4C391.4 144.7 396.3 147.1 398.3 148.7C400.3 150.3 401.7 153.0 400.0 153.9C398.3 154.8 391.6 155.0 387.9 153.9C384.1 152.7 379.2 148.2 377.5 147.0M341.2 172.9C342.6 172.6 346.6 170.9 349.8 171.2C353.0 171.5 359.9 173.7 360.2 174.7C360.5 175.7 354.8 177.6 351.6 177.3C348.4 177.0 342.9 173.6 341.2 172.9M334.3 190.2C335.7 190.5 340.6 190.6 342.9 192.0C345.2 193.4 347.1 197.7 348.0 198.9M356.7 205.8C357.9 204.6 362.1 200.2 363.7 198.9C365.3 197.6 365.9 198.2 366.3 198.0M358.7 160.8a5 4 0 1 0 10 0a5 4 0 1 0 -10 0M356.7 131.4C357.3 130.2 358.5 125.9 360.2 124.5C361.9 123.1 364.8 121.9 367.1 122.8C369.4 123.7 372.3 127.7 374.0 129.7C375.7 131.7 376.9 134.0 377.5 134.9M341.2 212.7C342.6 213.9 348.9 216.1 349.8 219.6C350.7 223.1 348.1 230.9 346.4 233.5C344.7 236.1 340.8 236.9 339.4 235.2C337.9 233.5 337.4 226.9 337.7 223.1C338.0 219.4 340.6 214.4 341.2 212.7M360.0 114.0C360.8 114.7 363.2 118.2 365.0 118.0C366.8 117.8 370.0 113.8 371.0 113.0M411.0 262.0C413.7 265.0 422.9 271.5 427.0 280.0C431.1 288.5 432.2 302.9 435.4 313.0C438.6 323.1 442.2 331.8 446.3 340.5C450.4 349.2 457.7 360.9 460.0 365.0M490.0 379.0C492.8 378.3 501.1 374.3 506.6 374.7C512.1 375.1 521.2 378.6 523.0 381.6C524.8 384.6 520.8 390.2 517.6 392.5C514.4 394.8 506.2 394.8 503.9 395.3M525.8 395.3C528.1 398.5 536.3 405.8 539.5 414.5C542.7 423.2 542.8 437.3 545.0 447.3C547.2 457.3 551.7 470.1 553.0 474.7M391.5 343.0C390.1 346.7 384.8 356.8 383.0 365.0C381.2 373.2 380.1 382.4 380.6 392.5C381.1 402.6 384.2 413.5 386.0 425.4C387.8 437.3 390.6 457.4 391.5 463.8M438.0 376.0C439.4 381.5 444.2 397.1 446.3 409.0C448.4 420.9 449.8 440.9 450.5 447.3M309.0 272.0C311.3 270.0 318.5 264.8 323.0 260.0C327.5 255.2 333.8 245.8 336.0 243.0M359.0 450.0C360.7 449.3 366.2 445.3 369.0 446.0C371.8 446.7 376.2 451.3 376.0 454.0C375.8 456.7 370.5 461.3 368.0 462.0C365.5 462.7 362.2 458.7 361.0 458.0M164.0 150.0C170.2 150.7 188.2 152.8 201.0 154.0C213.8 155.2 227.7 156.2 241.0 157.0C254.3 157.8 270.0 159.8 281.0 159.0C292.0 158.2 302.7 153.2 307.0 152.0M201.0 122.0C204.3 123.3 212.7 128.0 221.0 130.0C229.3 132.0 241.0 134.0 251.0 134.0C261.0 134.0 271.0 129.3 281.0 130.0C291.0 130.7 306.0 136.7 311.0 138.0M171.0 192.0C174.3 190.7 185.2 183.2 191.0 184.0C196.8 184.8 201.7 191.0 206.0 197.0C210.3 203.0 215.3 213.3 217.0 220.0C218.7 226.7 213.7 231.7 216.0 237.0C218.3 242.3 228.5 249.5 231.0 252.0M561.0 462.0L576.0 444.0M402.0 332.0C399.9 334.7 393.5 342.9 389.7 348.4C385.9 353.9 381.4 358.6 379.4 364.8C377.3 371.0 377.4 378.5 377.4 385.4C377.4 392.3 379.1 402.6 379.4 406.0M379.4 364.8C380.8 369.6 384.6 383.3 387.7 393.6C390.8 403.9 394.8 414.1 397.9 426.5C401.0 438.9 404.8 460.8 406.2 467.7M323.9 408.0C327.3 408.7 338.3 410.4 344.5 412.1C350.7 413.8 358.2 417.3 360.9 418.3M360.9 418.3L362.0 447.0M359.0 447.0C360.7 446.7 366.3 444.2 369.0 445.0C371.7 445.8 375.2 449.8 375.0 452.0C374.8 454.2 367.8 456.0 368.0 458.0C368.2 460.0 375.8 461.7 376.0 464.0C376.2 466.3 371.7 471.2 369.0 472.0C366.3 472.8 361.0 471.0 360.0 469.0C359.0 467.0 363.3 462.5 363.0 460.0C362.7 457.5 358.8 455.0 358.0 454.0M393.8 282.6C397.2 282.2 408.9 279.8 414.4 280.5C419.9 281.2 422.6 280.9 426.7 286.7C430.8 292.5 435.3 305.2 439.1 315.5C442.9 325.8 447.7 342.9 449.4 348.4M431.0 262.3C433.6 264.2 441.2 267.5 446.8 273.5C452.4 279.5 459.5 290.0 464.8 298.3C470.0 306.5 474.9 314.8 478.3 323.0C481.7 331.2 484.2 341.8 485.0 347.8C485.8 353.8 485.4 355.2 482.8 359.0C480.2 362.8 471.5 368.4 469.3 370.3M458.0 305.0C459.5 305.8 467.0 306.5 467.0 309.5C467.0 312.5 459.9 317.8 458.0 323.0C456.1 328.2 455.0 334.2 455.8 341.0C456.5 347.8 461.4 359.8 462.5 363.5M485.0 359.0C485.4 362.4 483.9 376.7 487.3 379.3C490.7 381.9 499.7 375.2 505.3 374.8C510.9 374.4 518.0 374.8 521.0 377.0C524.0 379.2 525.5 385.3 523.3 388.3C521.0 391.3 510.1 393.9 507.5 395.0M521.0 395.0C523.6 398.0 533.0 405.5 536.8 413.0C540.5 420.5 540.9 429.5 543.5 440.0C546.1 450.5 551.0 470.0 552.5 476.0"/></g>
<g fill="none" stroke="#333" stroke-width="1.800" stroke-linecap="round" filter="url(#sb)" opacity="0.850"><path d="M365.4 109.8C365.7 112.0 366.7 118.3 367.1 122.8C367.5 127.3 368.0 131.4 368.0 136.6C368.0 141.8 367.4 148.4 367.1 153.9C366.8 159.4 367.5 165.2 366.3 169.5C365.1 173.8 362.4 176.1 360.2 179.9C358.0 183.6 356.2 187.7 353.3 192.0C350.4 196.3 346.6 200.6 342.9 205.8C339.1 211.0 335.1 216.8 330.8 223.1C326.5 229.5 321.0 236.4 317.0 243.9C313.0 251.4 309.2 261.8 306.6 268.1C304.0 274.5 301.8 276.7 301.4 282.0C300.9 287.3 304.6 293.9 303.9 300.0C303.2 306.1 297.9 310.5 297.0 318.6C296.1 326.7 296.8 339.1 298.4 348.7C300.0 358.3 303.0 367.8 306.6 376.0C310.2 384.2 317.1 390.7 320.3 398.0C323.5 405.3 322.2 413.2 325.8 420.0C329.4 426.8 336.7 432.2 342.2 439.0C347.7 445.8 355.1 455.0 358.7 461.0C362.3 467.0 363.1 472.7 364.0 475.0M348.0 198.9C346.9 201.2 343.2 206.9 341.2 212.7C339.2 218.5 338.6 227.2 336.0 233.5C333.4 239.8 329.4 242.7 325.6 250.8C321.9 258.9 316.6 273.5 313.5 282.0C310.4 290.5 308.1 298.7 307.0 302.0M367.1 171.2C369.4 170.8 375.8 168.8 381.0 168.6C386.2 168.5 393.1 169.0 398.3 170.3C403.5 171.6 408.1 173.6 412.1 176.4C416.1 179.1 419.6 183.0 422.5 186.8C425.4 190.5 427.7 194.6 429.4 198.9C431.1 203.2 432.6 208.1 432.9 212.7C433.2 217.3 432.6 222.3 431.1 226.6C429.7 230.9 425.4 236.7 424.2 238.7M374.0 147.0L387.9 198.9M377.5 146.0L392.2 198.9M387.9 198.9L392.2 198.9M393.0 224.8C393.9 225.2 396.5 226.7 398.3 227.4C400.0 228.1 402.6 228.9 403.5 229.2M410.4 235.2C411.3 235.3 414.2 236.1 415.6 236.0C417.0 235.9 418.4 234.7 419.0 234.4M387.9 250.8C389.0 251.2 392.5 253.4 394.8 253.4C397.1 253.4 400.6 251.2 401.7 250.8M336.0 242.1C338.0 242.7 344.0 243.6 348.0 245.6C352.0 247.6 356.1 250.7 360.2 254.2C364.2 257.7 368.3 261.8 372.3 266.4C376.3 271.0 381.2 278.3 384.4 282.0C387.6 285.7 388.0 283.2 391.5 288.4C395.0 293.6 401.1 305.2 405.2 313.0C409.3 320.8 412.6 328.2 416.2 335.0C419.8 341.8 422.9 348.5 427.0 354.0C431.1 359.5 434.9 364.6 440.9 368.0C446.9 371.4 457.8 373.1 462.8 374.7C467.8 376.3 469.6 377.0 471.0 377.5M509.4 398.0C510.1 402.6 512.1 415.3 513.5 425.4C514.9 435.4 516.5 450.1 517.6 458.3C518.7 466.5 519.8 472.0 520.3 474.7M305.5 89.0C298.4 90.2 277.4 94.7 263.0 96.0C248.6 97.3 230.0 97.2 219.0 97.0C208.0 96.8 202.5 92.8 197.0 94.5C191.5 96.2 190.1 103.6 186.0 107.0C181.9 110.4 174.4 112.3 172.6 115.0C170.8 117.7 171.8 119.8 175.0 123.0C178.2 126.2 189.5 130.8 191.8 134.0C194.1 137.2 191.8 140.7 189.0 142.5C186.2 144.3 177.3 144.6 175.0 145.0M576.0 443.5C579.3 442.9 589.6 441.0 596.0 440.0C602.4 439.0 608.6 437.0 614.4 437.5C620.2 438.0 624.1 442.2 631.0 443.0C637.9 443.8 648.0 442.3 656.0 442.0C664.0 441.7 669.0 441.0 679.0 441.0C689.0 441.0 709.8 441.8 716.0 442.0M317.7 262.0C315.8 266.4 309.0 280.8 306.4 288.7C303.8 296.6 303.0 305.9 302.3 309.3M431.0 296.0C432.9 301.2 438.5 317.8 442.3 327.5C446.0 337.2 449.8 347.0 453.5 354.5C457.2 362.0 462.9 369.5 464.8 372.5M505.3 395.0C506.4 398.0 510.1 404.8 512.0 413.0C513.9 421.2 515.2 434.0 516.5 444.5C517.8 455.0 519.3 470.8 519.9 476.0"/></g>
</svg><!--IMG1-->
<!--STATUS-->
<div class="a" style="left:126px;top:1018px;width:184px;height:18px;background:#303030"></div>
<div class="a" style="left:77px;top:1018px;width:49px;height:18px;background:#232323"></div>
<span class="t" style="left:81px;top:1021px;font-size:12px;color:#e0e0e0">89.41%</span>
<span class="t" style="left:163px;top:1021px;font-size:12px;color:#b0b0b0">文档:1.22M/4.87M</span>
<svg class="a" style="left:298px;top:1021px" width="8" height="12" viewBox="0 0 8 12"><path d="M2 1.500 L5.500 6 L2 10.500" fill="none" stroke="#c0c0c0" stroke-width="1.200"/></svg>
<!--ICONSTRIP-->
<div class="a" style="left:896px;top:67px;width:272px;height:12px;background:#282828"></div>
<svg class="a" style="left:922px;top:70px" width="7" height="6" viewBox="0 0 8 8"><path d="M3.6 0.500 L0.800 4 L3.6 7.500Z M7.400 0.500 L4.600 4 L7.400 7.500Z" fill="#b0b0b0" stroke="none"/></svg>
<div class="a" style="left:896px;top:79px;width:1px;height:957px;background:#202020"></div>
<div class="a" style="left:935px;top:79px;width:3px;height:957px;background:#222"></div>
<div class="a" style="left:897px;top:118px;width:38px;height:2px;background:#232323"></div>
<div class="a" style="left:906px;top:82px;width:22px;height:4px;background:repeating-linear-gradient(90deg,#262626 0 1px,transparent 1px 2px)"></div>
<div class="a" style="left:897px;top:188px;width:38px;height:2px;background:#232323"></div>
<div class="a" style="left:906px;top:123px;width:22px;height:4px;background:repeating-linear-gradient(90deg,#262626 0 1px,transparent 1px 2px)"></div>
<div class="a" style="left:897px;top:229px;width:38px;height:2px;background:#232323"></div>
<div class="a" style="left:906px;top:193px;width:22px;height:4px;background:repeating-linear-gradient(90deg,#262626 0 1px,transparent 1px 2px)"></div>
<div class="a" style="left:897px;top:270px;width:38px;height:2px;background:#232323"></div>
<div class="a" style="left:906px;top:234px;width:22px;height:4px;background:repeating-linear-gradient(90deg,#262626 0 1px,transparent 1px 2px)"></div>
<div class="a" style="left:897px;top:311px;width:38px;height:2px;background:#232323"></div>
<div class="a" style="left:906px;top:275px;width:22px;height:4px;background:repeating-linear-gradient(90deg,#262626 0 1px,transparent 1px 2px)"></div>
<div class="a" style="left:897px;top:352px;width:38px;height:2px;background:#232323"></div>
<div class="a" style="left:906px;top:316px;width:22px;height:4px;background:repeating-linear-gradient(90deg,#262626 0 1px,transparent 1px 2px)"></div>
<svg class="a" style="left:897px;top:79px" width="38" height="280" viewBox="0 0 38 280"><g transform="translate(19.500,23.5)"><rect x="-7.500" y="-8" width="4.600" height="4.600" fill="none" stroke="#d8d8d8" stroke-width="1.100"/><rect x="-7.500" y="-2" width="4.600" height="4.600" fill="none" stroke="#d8d8d8" stroke-width="1.100"/><rect x="-8" y="3.600" width="5.600" height="5" fill="#d8d8d8"/><path d="M1.500 -5.500 Q7.500 -5 6 3 Q5 6.500 1.500 8.500 Q5.500 3 3.200 -2.400 L0.800 -0.400 L0.600 -7.600 L6.500 -7.200Z" fill="#d8d8d8"/></g><g transform="translate(19.500,61.5)"><path d="M-3 -8.500 L2.500 -6 V1 L-3 3.800 L-8.500 1 V-6Z" fill="none" stroke="#d8d8d8" stroke-width="1.300" stroke-linejoin="round"/><path d="M-8.500 -6 L-3 -3.400 L2.500 -6 M-3 -3.400 V3.800" fill="none" stroke="#d8d8d8" stroke-width="1.100"/><rect x="4" y="-8" width="4.600" height="4.400" fill="#d8d8d8"/><rect x="4" y="-2" width="4.600" height="4.400" fill="#d8d8d8"/><rect x="-8.500" y="5.500" width="17" height="3.600" fill="#d8d8d8"/><path d="M4.500 6.400 H7.900 L6.200 8.400Z" fill="#323232"/></g><g transform="translate(19.500,92)"><path d="M-9.500 -5.500 Q-6.500 -9 -2.500 -7.200 L-0.500 -5.500 L-2.500 -3.800 Q-6.500 -2.200 -9.500 -5.500Z" fill="#d8d8d8"/><path d="M0.500 -5.500 H9" stroke="#d8d8d8" stroke-width="2"/><path d="M-8.500 3 H0.500" stroke="#d8d8d8" stroke-width="2"/><path d="M1.500 3 L6.500 -1.500 Q10.500 3 8 8.500 Z" fill="#d8d8d8"/></g><g transform="translate(19.500,133.5)"><path d="M-8.500 -7.500h2.200M-8.500 -4.500h2.200M-8.500 -1.500h2.200M-5.200 -7.500h2.400M-5.200 -4.500h2.400M-5.200 -1.500h2.400" stroke="#d8d8d8" stroke-width="1.400"/><path d="M9.500 -6.500 Q4 -3.500 -0.500 1.800 L1.800 4 Q7.200 -0.500 9.500 -6.500Z" fill="#d8d8d8"/><path d="M-1.500 2.800 L0.800 5 Q-1.500 9 -8 7.600 Q-4.600 6.200 -1.500 2.800Z" fill="#d8d8d8"/></g><g transform="translate(19.500,174.5)"><path d="M-7.500 7.500 L4.500 -4.500" stroke="#d8d8d8" stroke-width="3.200" stroke-linecap="round"/><path d="M4 -4 L8.500 -8.500" stroke="#d8d8d8" stroke-width="1.600"/><path d="M-4.500 -4.500 L5 5" stroke="#d8d8d8" stroke-width="2.200"/><circle cx="-6" cy="-6" r="3" fill="none" stroke="#d8d8d8" stroke-width="1.800" stroke-dasharray="14 5" transform="rotate(20 -6 -6)"/><circle cx="6.400" cy="6.200" r="2.400" fill="none" stroke="#d8d8d8" stroke-width="1.600"/></g><g transform="translate(19.500,216)"><path d="M-6.500 -8 L8 0 L-6.500 8Z" fill="#d8d8d8"/></g><g transform="translate(19.500,257)"><path d="M-2.800 4.500 Q-2.800 2.500 -4.500 0.500 Q-6.500 -2 -5.500 -5 Q-4 -8.500 0 -8.500 Q4 -8.500 5.500 -5 Q6.500 -2 4.500 0.500 Q2.800 2.500 2.800 4.500Z" fill="none" stroke="#d8d8d8" stroke-width="1.500"/><path d="M-2.800 5.200 H2.800 V7.500 Q1.500 9.500 0 9.500 Q-1.500 9.500 -2.800 7.500Z" fill="#d8d8d8"/></g></svg>
<!--COLORPANEL-->
<div class="a" style="left:938px;top:79px;width:230px;height:28px;background:#282828"></div>
<div class="a" style="left:938px;top:79px;width:41px;height:28px;background:#323232"></div>
<div class="a" style="left:1017px;top:79px;width:1px;height:27px;background:#242424"></div>
<div class="a" style="left:1058px;top:79px;width:1px;height:27px;background:#242424"></div>
<span class="t" style="left:948px;top:88px;font-size:11.500px;color:#e6e6e6">颜色</span>
<span class="t" style="left:989px;top:88px;font-size:11.500px;color:#9a9a9a">色板</span>
<span class="t" style="left:1031px;top:88px;font-size:11.500px;color:#9a9a9a">库</span>
<div class="a" style="left:957px;top:128px;width:20px;height:19px;background:#fff;border:1px solid #2a2a2a"></div>
<div class="a" style="left:946px;top:116px;width:22px;height:22px;background:#000;border:1px solid #777;box-shadow:inset 0 0 0 1px #f4f4f4"></div>
<div class="a" style="left:983px;top:114px;width:161px;height:234px;background:linear-gradient(to bottom,rgba(0,0,0,0),#000),linear-gradient(to right,#fff,#f00)"></div>
<svg class="a" style="left:981px;top:340px" width="10" height="10" viewBox="0 0 10 10"><circle cx="2.500" cy="7.500" r="4" fill="none" stroke="#e8e8e8" stroke-width="1"/></svg>
<div class="a" style="left:1160px;top:114px;width:8px;height:234px;background:linear-gradient(to bottom,#f00 0%,#f0f 16.600%,#00f 33.300%,#0ff 50%,#0f0 66.600%,#ff0 83.300%,#f00 100%)"></div>
<svg class="a" style="left:1150px;top:342px" width="8" height="10" viewBox="0 0 8 10"><path d="M1 1 L7 5 L1 9Z" fill="#e0e0e0"/></svg>
<div class="a" style="left:938px;top:354px;width:230px;height:2px;background:#222"></div>
<!--ADJPANEL-->
<div class="a" style="left:938px;top:356px;width:230px;height:28px;background:#282828"></div>
<div class="a" style="left:938px;top:356px;width:42px;height:28px;background:#323232"></div>
<div class="a" style="left:1023px;top:356px;width:1px;height:27px;background:#242424"></div>
<span class="t" style="left:948px;top:365px;font-size:11.500px;color:#e6e6e6">调整</span>
<span class="t" style="left:990px;top:365px;font-size:11.500px;color:#9a9a9a">字符</span>
<span class="t" style="left:947px;top:395px;font-size:12px;color:#7c7c7c">添加调整</span>
<svg class="a" style="left:938px;top:410px" width="230" height="80" viewBox="0 0 230 80"><defs><linearGradient id="hg" x1="0" x2="1"><stop offset="0" stop-color="#222"/><stop offset="1" stop-color="#ddd"/></linearGradient><linearGradient id="hg2" x1="0" x2="1"><stop offset="0" stop-color="#ddd"/><stop offset="1" stop-color="#333"/></linearGradient><linearGradient id="vg" x1="0" x2="0" y1="0" y2="1"><stop offset="0" stop-color="#333"/><stop offset="1" stop-color="#bbb"/></linearGradient><linearGradient id="dg" x1="0" y1="0" x2="1" y2="1"><stop offset="0" stop-color="#ddd"/><stop offset="0.350" stop-color="#555"/><stop offset="0.600" stop-color="#ccc"/><stop offset="1" stop-color="#444"/></linearGradient></defs><g transform="translate(56.5,13.5)"><circle r="4.200" fill="none" stroke="#d4d4d4" stroke-width="1.200"/><path d="M0 -4.200 A4.200 4.200 0 0 1 0 4.200Z" fill="#d4d4d4"/><path d="M0 -8V-6M0 6V8M-8 0H-6M6 0H8M-5.700 -5.700L-4.300 -4.300M4.300 4.300L5.700 5.700M-5.700 5.700L-4.300 4.300M4.300 -4.300L5.700 -5.700" stroke="#d4d4d4" stroke-width="1.300"/></g><g transform="translate(81,13.5)"><path d="M-9 5 V-1 L-8 1 L-7 -3 L-6 0 L-5 -4 L-4 -1 L-3 -6 L-2 -2 L-1 -5 L0 -1 L1 -6 L2 -2 L3 -4 L4 0 L5 -3 L6 1 L7 -2 L8 1 L9 -1 V5Z" fill="#d4d4d4"/></g><g transform="translate(105,13.5)"><rect x="-7.500" y="-6.500" width="15" height="12.500" fill="none" stroke="#9a9a9a" stroke-width="1.100"/><path d="M-7.500 -2.300H7.500M-7.500 1.900H7.500M-2.500 -6.500V6M2.500 -6.500V6" stroke="#9a9a9a" stroke-width="1"/><path d="M-2.500 6 Q2.500 3 3 -1 Q3.500 -4.500 6.500 -6.500" fill="none" stroke="#d4d4d4" stroke-width="1.200"/></g><g transform="translate(129,13.5)"><rect x="-7.500" y="-6" width="15" height="12" fill="none" stroke="#d4d4d4" stroke-width="1.300"/><path d="M7.500 -6 V6 H-7.500Z" fill="#d4d4d4"/><path d="M-5.500 -2.500H-1.500M-3.500 -4.500V-0.500" stroke="#d4d4d4" stroke-width="1.200"/><path d="M1.500 3H5.500" stroke="#323232" stroke-width="1.200"/></g><g transform="translate(152.5,13.5)"><path d="M-7 -6 H7 L0 6.500Z" fill="url(#vg)" stroke="#d4d4d4" stroke-width="1.300" stroke-linejoin="round"/></g><g transform="translate(45,41)"><rect x="-7.500" y="-6" width="15" height="12" fill="url(#hg2)" stroke="#d4d4d4" stroke-width="1.300"/><rect x="-7" y="-5.500" width="14" height="4.500" fill="#bdbdbd"/><path d="M-4 -5.500V-1M-1 -5.500V-1M2 -5.500V-1M5 -5.500V-1" stroke="#444" stroke-width="1.200"/><path d="M-7.500 -0.500H7.500" stroke="#d4d4d4" stroke-width="1"/></g><g transform="translate(69,41)"><path d="M-6 -4.500 H6" stroke="#d4d4d4" stroke-width="1.200"/><circle cy="-5" r="1.800" fill="#323232" stroke="#d4d4d4" stroke-width="1.100"/><path d="M-6 -4.500 L-8.500 2.500 M-6 -4.500 L-3.500 2.500 M6 -4.500 L3.500 2.500 M6 -4.500 L8.500 2.500" stroke="#d4d4d4" stroke-width="0.900"/><path d="M-9 2.500 H-3 Q-3.500 6.500 -6 6.500 Q-8.500 6.500 -9 2.500Z M3 2.500 H9 Q8.500 6.500 6 6.500 Q3.500 6.500 3 2.500Z" fill="#d4d4d4"/></g><g transform="translate(93,41)"><rect x="-7.500" y="-6" width="15" height="12" fill="#1c1c1c" stroke="#d4d4d4" stroke-width="1.300"/><rect x="0" y="-6" width="7.500" height="12" fill="#d4d4d4"/></g><g transform="translate(116,41)"><path d="M-8 -4 H-5 L-4 -6 H1 L2 -4 H5 V4.500 H-8Z" fill="#d4d4d4"/><circle cx="-1.500" cy="0.300" r="2.600" fill="#323232"/><circle cx="5" cy="4.500" r="3.300" fill="#323232" stroke="#d4d4d4" stroke-width="1.200"/></g><g transform="translate(140,41)"><circle cx="0" cy="-2.500" r="4.800" fill="#8a8a8a"/><circle cx="-3.600" cy="3" r="4.800" fill="#c8c8c8" opacity="0.850"/><circle cx="3.600" cy="3" r="4.800" fill="#a8a8a8" opacity="0.850"/><circle cx="0" cy="1" r="1.800" fill="#2a2a2a"/></g><g transform="translate(165,41)"><rect x="-7.500" y="-6" width="15" height="12" fill="none" stroke="#d4d4d4" stroke-width="1.300"/><path d="M-7.500 -2H7.500M-7.500 2H7.500M-2.500 -6V6M2.500 -6V6" stroke="#d4d4d4" stroke-width="1.200"/></g><g transform="translate(57,67.5)"><rect x="-7.500" y="-6" width="15" height="12" fill="#1c1c1c" stroke="#d4d4d4" stroke-width="1.300"/><ellipse rx="5.500" ry="3.600" transform="rotate(-35)" fill="#d4d4d4"/><path d="M-7 5.500 L7 -5.500" stroke="#1c1c1c" stroke-width="1"/></g><g transform="translate(81,67.5)"><rect x="-7.500" y="-6" width="15" height="12" fill="url(#dg)" stroke="#d4d4d4" stroke-width="1.300"/></g><g transform="translate(105,67.5)"><rect x="-7.500" y="-6" width="15" height="12" fill="#d4d4d4" stroke="#d4d4d4" stroke-width="1.300"/><path d="M-7.500 3.500 H-4 V1.500 H-1 V-0.500 H2 V-2.500 H5 V-4.500 H7.500" fill="none" stroke="#1a1a1a" stroke-width="2.400"/></g><g transform="translate(129,67.5)"><rect x="-7.500" y="-6" width="15" height="12" fill="#8c8c8c" stroke="#d4d4d4" stroke-width="1.300"/><path d="M-7.500 -6 L0 0 L-7.500 6Z" fill="#555"/><path d="M7.500 -6 L0 0 L7.500 6Z" fill="#555"/><path d="M-7.500 -6 L0 0 L7.500 -6Z" fill="#d8d8d8"/></g><g transform="translate(153,67.5)"><rect x="-7.500" y="-6" width="15" height="12" fill="url(#hg)" stroke="#d4d4d4" stroke-width="1.300"/></g></svg>
<div class="a" style="left:938px;top:497px;width:230px;height:2px;background:#222"></div>
<!--LAYERPANEL-->
<div class="a" style="left:938px;top:528px;width:230px;height:1px;background:#282828"></div><div class="a" style="left:938px;top:558px;width:230px;height:1px;background:#282828"></div><div class="a" style="left:938px;top:586px;width:230px;height:1px;background:#282828"></div>
<div class="a" style="left:938px;top:499px;width:230px;height:29px;background:#282828"></div>
<div class="a" style="left:938px;top:499px;width:42px;height:29px;background:#323232"></div>
<div class="a" style="left:1023px;top:499px;width:1px;height:28px;background:#242424"></div><div class="a" style="left:1065px;top:499px;width:1px;height:28px;background:#242424"></div>
<span class="t" style="left:948px;top:509px;font-size:11.500px;color:#e6e6e6">图层</span><span class="t" style="left:990px;top:509px;font-size:11.500px;color:#9a9a9a">通道</span><span class="t" style="left:1032px;top:509px;font-size:11.500px;color:#9a9a9a">路径</span>
<div class="a" style="left:943px;top:535px;width:86px;height:20px;background:#2a2a2a;border:1px solid #3a3a3a;border-radius:2px"></div>
<svg class="a" style="left:949px;top:539px" width="12" height="12" viewBox="0 0 12 12"><circle cx="7.200" cy="4.600" r="3.300" fill="none" stroke="#8a8a8a" stroke-width="1.400"/><path d="M4.800 7.200 L1.200 10.800" stroke="#8a8a8a" stroke-width="1.600"/></svg>
<span class="t" style="left:965px;top:539px;font-size:12px;color:#7c7c7c">类型</span>
<svg class="a" style="left:1016px;top:542px" width="9" height="7" viewBox="0 0 9 7"><path d="M1 1.500L4.500 5L8 1.500" fill="none" stroke="#666" stroke-width="1.100"/></svg>
<svg class="a" style="left:1040px;top:536px" width="120" height="18" viewBox="0 0 120 18">
<g transform="translate(10,9)"><rect x="-6" y="-4.500" width="12" height="9.500" fill="none" stroke="#8a8a8a" stroke-width="1.200"/><path d="M-4 3.500L-1.500 -0.500L0.500 2L2 0.500L4 3.500Z" fill="#8a8a8a"/></g>
<g transform="translate(34.500,9)"><circle r="5.200" fill="none" stroke="#8a8a8a" stroke-width="1.300"/><path d="M-3.700 3.700A5.200 5.200 0 0 1 3.700 -3.700Z" fill="#8a8a8a"/></g>
<g transform="translate(59,9)"><path d="M-5.200 -5.500H5.200V-2.300H4.200Q4 -4 2.800 -4H1.100V4Q1.100 4.800 2.800 4.800V5.800H-2.800V4.800Q-1.100 4.800 -1.100 4V-4H-2.800Q-4 -4 -4.200 -2.300H-5.200Z" fill="#8a8a8a"/></g>
<g transform="translate(82.500,9)"><rect x="-4.500" y="-4.500" width="9" height="9" fill="none" stroke="#8a8a8a" stroke-width="1.200"/><rect x="-6.200" y="-6.200" width="3.200" height="3.200" fill="#323232" stroke="#8a8a8a" stroke-width="0.900"/><rect x="3" y="-6.200" width="3.200" height="3.200" fill="#323232" stroke="#8a8a8a" stroke-width="0.900"/><rect x="-6.200" y="3" width="3.200" height="3.200" fill="#323232" stroke="#8a8a8a" stroke-width="0.900"/><rect x="3" y="3" width="3.200" height="3.200" fill="#323232" stroke="#8a8a8a" stroke-width="0.900"/></g>
<g transform="translate(107,9)"><path d="M-2.500 -6H2.500L5 -3.500V5.500H-2.500Z" fill="none" stroke="#8a8a8a" stroke-width="1.200"/><path d="M2.500 -6V-3.500H5" fill="none" stroke="#8a8a8a" stroke-width="1"/><rect x="-5.500" y="0" width="5.500" height="6" fill="#8a8a8a"/></g></svg>
<div class="a" style="left:943px;top:563px;width:116px;height:19px;background:#2c2c2c;border:1px solid #393939;border-radius:2px"></div>
<span class="t" style="left:950px;top:567px;font-size:12px;color:#7c7c7c">线性减淡（添加 ...</span>
<svg class="a" style="left:1048px;top:569px" width="9" height="7" viewBox="0 0 9 7"><path d="M1 1.500L4.500 5L8 1.500" fill="none" stroke="#666" stroke-width="1.100"/></svg>
<span class="t" style="left:1067px;top:567px;font-size:12px;color:#7c7c7c">不透明度:</span>
<div class="a" style="left:1124px;top:563px;width:38px;height:19px;background:#2c2c2c;border:1px solid #393939"></div><div class="a" style="left:1162px;top:563px;width:6px;height:19px;background:#2c2c2c;border:1px solid #393939"></div>
<span class="t" style="left:1128px;top:568px;font-size:11px;color:#6e6e6e">100%</span>
<span class="t" style="left:945px;top:593px;font-size:12px;color:#7c7c7c">锁定:</span>
<svg class="a" style="left:978px;top:590px" width="110" height="20" viewBox="0 0 110 20">
<g transform="translate(9.500,10)"><rect x="-5.500" y="-5.500" width="11" height="11" fill="#555" /><path d="M-5.500 -5.500h3.700v3.700h-3.700zM1.800 -5.500h3.700v3.700h-3.700zM-1.800 -1.800h3.600v3.600h-3.600zM-5.500 1.800h3.700v3.700h-3.700zM1.800 1.800h3.700v3.700h-3.700z" fill="#b8b8b8"/></g>
<g transform="translate(32,10)"><path d="M6.500 -6.500Q2.500 -3.500 -0.500 0.500L1.300 2.200Q5 -1.500 6.500 -6.500Z" fill="#8a8a8a"/><path d="M-1.200 1.300L0.500 3Q-1 6.500 -6 6Q-3.200 4.800 -1.200 1.300Z" fill="#8a8a8a"/></g>
<g transform="translate(53.500,10)"><path d="M-5 0H5M0 -5V5" stroke="#8a8a8a" stroke-width="1.300"/><path d="M-6.500 0L-4 -2.400V2.400ZM6.500 0L4 -2.400V2.400ZM0 -6.500L-2.400 -4H2.400ZM0 6.500L-2.400 4H2.400Z" fill="#8a8a8a"/></g>
<g transform="translate(76,10)"><path d="M-6.500 -3.500H3.500V6.500M-3.500 -6.500V3.500H6.500" fill="none" stroke="#8a8a8a" stroke-width="1.200" stroke-dasharray="2.500 1.200"/><path d="M2 -6.500L6.500 -2" stroke="#8a8a8a" stroke-width="1.200"/></g>
<g transform="translate(98,10)"><rect x="-5" y="-1" width="10" height="7.500" rx="0.800" fill="#b0b0b0"/><path d="M-3 -1V-3.200Q-3 -6 0 -6Q3 -6 3 -3.200V-1" fill="none" stroke="#b0b0b0" stroke-width="1.500"/><rect x="-0.800" y="1.500" width="1.600" height="2.500" fill="#323232"/></g></svg>
<span class="t" style="left:1092px;top:593px;font-size:12px;color:#7c7c7c">填充:</span>
<div class="a" style="left:1124px;top:591px;width:38px;height:18px;background:#2c2c2c;border:1px solid #393939"></div><div class="a" style="left:1162px;top:591px;width:6px;height:18px;background:#2c2c2c;border:1px solid #393939"></div>
<span class="t" style="left:1128px;top:595px;font-size:11px;color:#6e6e6e">100%</span>
<div class="a" style="left:938px;top:613px;width:230px;height:1px;background:#262626"></div>
<div class="a" style="left:970px;top:614px;width:198px;height:45px;background:#484848"></div>
<div class="a" style="left:938px;top:839px;width:230px;height:172px;background:#2b2b2b"></div>
<div class="a" style="left:969px;top:614px;width:1px;height:225px;background:#2a2a2a"></div>
<div class="a" style="left:938px;top:658px;width:230px;height:1px;background:#2a2a2a"></div>
<svg class="a" style="left:945px;top:632px" width="16" height="10" viewBox="0 0 16 10"><path d="M0.500 5Q4 0.500 8 0.500Q12 0.500 15.500 5Q12 9.500 8 9.500Q4 9.500 0.500 5Z" fill="#e2e2e2"/><circle cx="8" cy="4.800" r="3" fill="#323232"/><circle cx="8" cy="4.800" r="1.600" fill="#e2e2e2"/></svg>
<div class="a" style="left:972px;top:618px;width:57px;height:39px;background:#5a5a5a"></div>
<svg class="a" style="left:973px;top:619px" width="55" height="37" viewBox="0 0 55 37"><defs><filter id="tf1" x="-5%" y="-5%" width="110%" height="110%"><feGaussianBlur stdDeviation="0.900"/></filter><clipPath id="tc1"><rect width="55" height="37"/></clipPath></defs><g clip-path="url(#tc1)"><g filter="url(#tf1)"><rect x="-3" y="-3" width="61" height="43" fill="#3a3a3a"/><rect width="55" height="37" fill="#3a3a3a"/><path d="M24 0H55V14Q44 6 34 10Q28 8 24 0Z" fill="#0a0a0a"/><path d="M30 14Q40 8 55 16V30H36Z" fill="#3a3a3a"/><path d="M38 16Q46 12 55 20V28H42Z" fill="#1a1a1a" opacity="0.600"/><path d="M0 0H30Q28 8 20 10Q10 10 0 16Z" fill="#bdbdbd"/><path d="M0 14Q10 9 20 10L30 37H0Z" fill="#8a8a8a"/><path d="M0 24L14 18L24 37H0Z" fill="#c4c4c4"/><path d="M34 30H55V37H34Z" fill="#111"/><circle cx="29.500" cy="15" r="3" fill="#d0d0d0"/><path d="M26 19Q30 16 33 20L38 37H24Z" fill="#2c2c2c"/><path d="M33 24L36 30L40 37H36Z" fill="#4a4a4a"/></g></g></svg>
<span class="t" style="left:1037px;top:632px;font-size:12px;color:#eaeaea">图层 2 拷贝</span>
<div class="a" style="left:938px;top:703px;width:230px;height:1px;background:#2a2a2a"></div>
<svg class="a" style="left:945px;top:677px" width="16" height="10" viewBox="0 0 16 10"><path d="M0.500 5Q4 0.500 8 0.500Q12 0.500 15.500 5Q12 9.500 8 9.500Q4 9.500 0.500 5Z" fill="#e2e2e2"/><circle cx="8" cy="4.800" r="3" fill="#323232"/><circle cx="8" cy="4.800" r="1.600" fill="#e2e2e2"/></svg>
<div class="a" style="left:972px;top:663px;width:57px;height:39px;background:#5a5a5a"></div>
<svg class="a" style="left:973px;top:664px" width="55" height="37" viewBox="0 0 55 37"><defs><filter id="tf2" x="-5%" y="-5%" width="110%" height="110%"><feGaussianBlur stdDeviation="0.900"/></filter><clipPath id="tc2"><rect width="55" height="37"/></clipPath></defs><g clip-path="url(#tc2)"><g filter="url(#tf2)"><rect x="-3" y="-3" width="61" height="43" fill="#a9a9a9"/><rect width="55" height="37" fill="#a9a9a9"/><path d="M24 0H55V14Q44 6 34 10Q28 8 24 0Z" fill="#f2f2f2"/><path d="M30 14Q40 8 55 16V30H36Z" fill="#a9a9a9"/><path d="M38 16Q46 12 55 20V28H42Z" fill="#d0d0d0" opacity="0.600"/><path d="M0 0H30Q28 8 20 10Q10 10 0 16Z" fill="#4c4c4c"/><path d="M0 14Q10 9 20 10L30 37H0Z" fill="#a3a3a3"/><path d="M0 24L14 18L24 37H0Z" fill="#6a6a6a"/><path d="M34 30H55V37H34Z" fill="#eaeaea"/><circle cx="29.500" cy="15" r="3" fill="#222"/><path d="M26 19Q30 16 33 20L38 37H24Z" fill="#d4d4d4"/><path d="M33 24L36 30L40 37H36Z" fill="#9a9a9a"/></g></g></svg>
<span class="t" style="left:1037px;top:677px;font-size:12px;color:#eaeaea">图层 2</span>
<div class="a" style="left:938px;top:748px;width:230px;height:1px;background:#2a2a2a"></div>
<svg class="a" style="left:945px;top:722px" width="16" height="10" viewBox="0 0 16 10"><path d="M0.500 5Q4 0.500 8 0.500Q12 0.500 15.500 5Q12 9.500 8 9.500Q4 9.500 0.500 5Z" fill="#e2e2e2"/><circle cx="8" cy="4.800" r="3" fill="#323232"/><circle cx="8" cy="4.800" r="1.600" fill="#e2e2e2"/></svg>
<div class="a" style="left:938px;top:793px;width:230px;height:1px;background:#2a2a2a"></div>
<svg class="a" style="left:945px;top:767px" width="16" height="10" viewBox="0 0 16 10"><path d="M0.500 5Q4 0.500 8 0.500Q12 0.500 15.500 5Q12 9.500 8 9.500Q4 9.500 0.500 5Z" fill="#e2e2e2"/><circle cx="8" cy="4.800" r="3" fill="#323232"/><circle cx="8" cy="4.800" r="1.600" fill="#e2e2e2"/></svg>
<div class="a" style="left:972px;top:753px;width:57px;height:39px;background:#5a5a5a"></div>
<svg class="a" style="left:973px;top:754px" width="55" height="37" viewBox="0 0 55 37"><defs><filter id="tf3" x="-5%" y="-5%" width="110%" height="110%"><feGaussianBlur stdDeviation="0.900"/></filter><clipPath id="tc3"><rect width="55" height="37"/></clipPath></defs><g clip-path="url(#tc3)"><g filter="url(#tf3)"><rect x="-3" y="-3" width="61" height="43" fill="#d98a5e"/><rect width="55" height="37" fill="#d98a5e"/><path d="M24 0H55V14Q44 6 34 10Q28 8 24 0Z" fill="#f1e6dc"/><path d="M30 14Q40 8 55 16V30H36Z" fill="#d98a5e"/><path d="M38 16Q46 12 55 20V28H42Z" fill="#eab79a" opacity="0.600"/><path d="M0 0H30Q28 8 20 10Q10 10 0 16Z" fill="#7a4a32"/><path d="M0 14Q10 9 20 10L30 37H0Z" fill="#b9a59a"/><path d="M0 24L14 18L24 37H0Z" fill="#8a4e3a"/><path d="M34 30H55V37H34Z" fill="#efe6e0"/><circle cx="29.500" cy="15" r="3" fill="#2a1c1c"/><path d="M26 19Q30 16 33 20L38 37H24Z" fill="#e6bfe0"/><path d="M33 24L36 30L40 37H36Z" fill="#c98acb"/></g></g></svg>
<span class="t" style="left:1037px;top:767px;font-size:12px;color:#eaeaea">图层 1</span>
<div class="a" style="left:938px;top:838px;width:230px;height:1px;background:#2a2a2a"></div>
<svg class="a" style="left:945px;top:812px" width="16" height="10" viewBox="0 0 16 10"><path d="M0.500 5Q4 0.500 8 0.500Q12 0.500 15.500 5Q12 9.500 8 9.500Q4 9.500 0.500 5Z" fill="#e2e2e2"/><circle cx="8" cy="4.800" r="3" fill="#323232"/><circle cx="8" cy="4.800" r="1.600" fill="#e2e2e2"/></svg>
<div class="a" style="left:972px;top:798px;width:57px;height:39px;background:#5a5a5a"></div>
<svg class="a" style="left:973px;top:799px" width="55" height="37" viewBox="0 0 55 37"><defs><filter id="tf4" x="-5%" y="-5%" width="110%" height="110%"><feGaussianBlur stdDeviation="0.900"/></filter><clipPath id="tc4"><rect width="55" height="37"/></clipPath></defs><g clip-path="url(#tc4)"><g filter="url(#tf4)"><rect x="-3" y="-3" width="61" height="43" fill="#9fbf86"/><rect width="55" height="37" fill="#9fbf86"/><path d="M24 0H55V14Q44 6 34 10Q28 8 24 0Z" fill="#e8efe4"/><path d="M30 14Q40 8 55 16V30H36Z" fill="#9fbf86"/><path d="M38 16Q46 12 55 20V28H42Z" fill="#c9dcb9" opacity="0.600"/><path d="M0 0H30Q28 8 20 10Q10 10 0 16Z" fill="#4a5a3a"/><path d="M0 14Q10 9 20 10L30 37H0Z" fill="#a8a59a"/><path d="M0 24L14 18L24 37H0Z" fill="#6f6a5c"/><path d="M34 30H55V37H34Z" fill="#dfe3d8"/><circle cx="29.500" cy="15" r="3" fill="#2a1c1c"/><path d="M26 19Q30 16 33 20L38 37H24Z" fill="#e3b7d3"/><path d="M33 24L36 30L40 37H36Z" fill="#c2364f"/></g></g></svg>
<span class="t" style="left:1037px;top:812px;font-size:12px;color:#eaeaea">背景</span>
<svg class="a" style="left:969px;top:615px" width="63" height="44" viewBox="0 0 63 44"><path d="M1 12V1.500H20M42 1.500H61.500V12M61.500 31V42.500H42M20 42.500H1V31" fill="none" stroke="#f0f0f0" stroke-width="1.300"/></svg>
<svg class="a" style="left:991px;top:720px" width="18" height="14" viewBox="0 0 18 14"><rect x="0.500" y="0.500" width="17" height="13" fill="#8c8c8c" stroke="#cfcfcf" stroke-width="1"/><path d="M0.500 0.500L9 7L0.500 13.500Z" fill="#555"/><path d="M17.500 0.500L9 7L17.500 13.500Z" fill="#555"/><path d="M0.500 0.500L9 7L17.500 0.500Z" fill="#d8d8d8"/></svg>
<div class="a" style="left:1043px;top:708px;width:56px;height:38px;background:#fff;border:1px solid #555"></div>
<span class="t" style="left:1109px;top:722px;font-size:12px;color:#eaeaea">选取颜...</span>
<svg class="a" style="left:1151px;top:810px" width="13" height="14" viewBox="0 0 13 14"><rect x="1.500" y="5.500" width="10" height="7.500" fill="none" stroke="#d8d8d8" stroke-width="1.200"/><path d="M3.500 5.500V3.500Q3.500 1 6.500 1Q9.500 1 9.500 3.500V5.500" fill="none" stroke="#d8d8d8" stroke-width="1.300"/><rect x="5.500" y="8" width="2" height="2.500" fill="#d8d8d8"/></svg>
<div class="a" style="left:1149px;top:605px;width:48px;height:48px;border-radius:50%;background:radial-gradient(circle at 45% 35%,#5fe07a 0%,#38c956 50%,#2ab046 100%);border:2.500px solid #f0faf0;box-shadow:0 1px 3px rgba(0,0,0,.450)"></div>
<span class="t" style="left:1155px;top:623px;font-size:11px;font-weight:bold;color:#fff;font-family:'DejaVu Sans','Liberation Sans',sans-serif">46</span>
<div class="a" style="left:938px;top:1011px;width:230px;height:23px;background:#323232"></div>
<svg class="a" style="left:985px;top:1012px" width="183" height="22" viewBox="0 0 183 22">
<g transform="translate(13,11)"><rect x="-7" y="-3" width="7.500" height="6" rx="3" fill="none" stroke="#8a8a8a" stroke-width="1.300"/><rect x="-0.500" y="-3" width="7.500" height="6" rx="3" fill="none" stroke="#8a8a8a" stroke-width="1.300"/></g>
<g transform="translate(67,11)"><rect x="-6.500" y="-5" width="13" height="10" fill="#8a8a8a"/><circle r="2.800" fill="#323232"/></g>
<g transform="translate(95,11)"><circle r="5.500" fill="none" stroke="#8a8a8a" stroke-width="1.300"/><path d="M-3.900 3.900A5.500 5.500 0 0 0 3.900 -3.900Z" fill="#8a8a8a"/></g>
<g transform="translate(122,11)"><path d="M-6.500 -5H-1.500L0 -3.500H6.500V5H-6.500Z" fill="#8a8a8a"/></g>
<g transform="translate(148,11)"><path d="M-5.500 -5.500H5.500V5.500H-2L-5.500 2Z" fill="none" stroke="#8a8a8a" stroke-width="1.300"/><path d="M-5.500 2H-2V5.500" fill="none" stroke="#8a8a8a" stroke-width="1"/></g>
<g transform="translate(175,11)"><path d="M-5.500 -4H5.500M-2 -4V-6H2V-4M-4.500 -4V6H4.500V-4M-1.500 -1.500V3.500M1.500 -1.500V3.500" fill="none" stroke="#8a8a8a" stroke-width="1.200"/></g></svg>
<span class="t" style="left:1019px;top:1016px;font-size:12px;font-style:italic;color:#8a8a8a;font-family:'Liberation Serif',serif">fx</span>
<!--DIALOG-->
<div id="dlg">
<div class="a" style="left:436px;top:49px;width:334px;height:389px;border-radius:7px 7px 6px 6px;box-shadow:1px 3px 10px 3px rgba(0,0,0,.600),0 0 3px rgba(0,0,0,.750);border:1px solid #2b3036;background:
linear-gradient(to bottom,rgba(0,0,0,0) 0,rgba(0,0,0,0) 28px,#737980 28px,#d9dde1 113px,#2a2e34 115px,#20242a 268px,#b6d2ee 282px,#b3cfec 100%);overflow:hidden">
<div class="a" style="left:0;top:0;width:332px;height:28px;background:linear-gradient(100deg,#9aa0a6 0%,#7f868d 12%,#6d757d 30%,#747c84 45%,#59636d 60%,#34414e 80%,#4f5963 92%,#7c838a 100%)"></div>
<div class="a" style="left:0;top:0;width:332px;height:387px;border:1px solid rgba(235,240,245,.700);border-radius:6px 6px 5px 5px"></div>
</div>
<div class="a" style="left:443px;top:77px;width:321px;height:353px;border:1px solid rgba(225,232,240,.800)"></div>
<div class="a" style="left:444px;top:78px;width:319px;height:351px;background:#323232;border:1px solid #1c1c1c"></div>
<span class="t" style="left:444px;top:58px;font-size:12px;color:#000;text-shadow:0 0 5px rgba(255,255,255,.900),0 0 3px rgba(255,255,255,.800),0 0 8px rgba(255,255,255,.600)">最小值</span>
<div class="a" style="left:716px;top:50px;width:47px;height:20px;border:1px solid #4a1a14;border-top:none;border-radius:0 0 5px 5px;background:linear-gradient(to bottom,#e9a99c 0%,#d9705c 45%,#c53a22 50%,#c8432c 80%,#d96a52 100%);box-shadow:inset 0 0 0 1px rgba(255,220,210,.550)"></div>
<svg class="a" style="left:732px;top:53px" width="15" height="13" viewBox="0 0 15 13"><path d="M2 1.500H5.500L7.500 4.200L9.500 1.500H13L9.300 6.300L13.200 11.500H9.700L7.500 8.500L5.300 11.500H1.800L5.700 6.300Z" fill="#fff" stroke="#6a2a22" stroke-width="0.800"/></svg>
<svg class="a" style="left:455px;top:89px" width="207" height="207" viewBox="0 0 207 207">
<defs><filter id="pb" x="-5%" y="-5%" width="110%" height="110%"><feGaussianBlur stdDeviation="1.300"/></filter><filter id="pb2" x="-10%" y="-10%" width="120%" height="120%"><feGaussianBlur stdDeviation="3"/></filter><clipPath id="pc"><rect width="207" height="207"/></clipPath></defs>
<g clip-path="url(#pc)"><rect width="207" height="207" fill="#3e3e3e"/>
<g filter="url(#pb)"><rect x="64" y="69" width="10" height="10" fill="rgb(42,42,42)" opacity="0.600"/><rect x="169" y="60" width="10" height="10" fill="rgb(70,70,70)" opacity="0.600"/><rect x="41" y="59" width="9" height="9" fill="rgb(53,53,53)" opacity="0.600"/><rect x="14" y="114" width="11" height="11" fill="rgb(45,45,45)" opacity="0.600"/><rect x="196" y="147" width="10" height="10" fill="rgb(32,32,32)" opacity="0.600"/><rect x="79" y="203" width="7" height="7" fill="rgb(46,46,46)" opacity="0.600"/><rect x="56" y="68" width="8" height="8" fill="rgb(57,57,57)" opacity="0.600"/><rect x="114" y="155" width="8" height="8" fill="rgb(50,50,50)" opacity="0.600"/><rect x="74" y="134" width="7" height="7" fill="rgb(41,41,41)" opacity="0.600"/><rect x="126" y="125" width="10" height="10" fill="rgb(67,67,67)" opacity="0.600"/><rect x="119" y="118" width="8" height="8" fill="rgb(53,53,53)" opacity="0.600"/><rect x="12" y="94" width="9" height="9" fill="rgb(59,59,59)" opacity="0.600"/><rect x="150" y="92" width="12" height="12" fill="rgb(45,45,45)" opacity="0.600"/><rect x="104" y="72" width="9" height="9" fill="rgb(69,69,69)" opacity="0.600"/><rect x="84" y="201" width="7" height="7" fill="rgb(73,73,73)" opacity="0.600"/><rect x="116" y="187" width="9" height="9" fill="rgb(76,76,76)" opacity="0.600"/><rect x="100" y="174" width="7" height="7" fill="rgb(43,43,43)" opacity="0.600"/><rect x="195" y="122" width="10" height="10" fill="rgb(23,23,23)" opacity="0.600"/><rect x="132" y="206" width="11" height="11" fill="rgb(26,26,26)" opacity="0.600"/><rect x="183" y="101" width="12" height="12" fill="rgb(33,33,33)" opacity="0.600"/><rect x="20" y="55" width="11" height="11" fill="rgb(46,46,46)" opacity="0.600"/><rect x="152" y="109" width="12" height="12" fill="rgb(19,19,19)" opacity="0.600"/><rect x="90" y="134" width="11" height="11" fill="rgb(65,65,65)" opacity="0.600"/><rect x="178" y="90" width="9" height="9" fill="rgb(60,60,60)" opacity="0.600"/><rect x="140" y="107" width="8" height="8" fill="rgb(18,18,18)" opacity="0.600"/><rect x="44" y="83" width="9" height="9" fill="rgb(75,75,75)" opacity="0.600"/><rect x="34" y="91" width="8" height="8" fill="rgb(72,72,72)" opacity="0.600"/><rect x="73" y="137" width="12" height="12" fill="rgb(70,70,70)" opacity="0.600"/><rect x="196" y="151" width="11" height="11" fill="rgb(31,31,31)" opacity="0.600"/><rect x="78" y="110" width="8" height="8" fill="rgb(78,78,78)" opacity="0.600"/><rect x="80" y="76" width="12" height="12" fill="rgb(66,66,66)" opacity="0.600"/><rect x="29" y="100" width="7" height="7" fill="rgb(38,38,38)" opacity="0.600"/><rect x="115" y="132" width="12" height="12" fill="rgb(42,42,42)" opacity="0.600"/><rect x="180" y="144" width="8" height="8" fill="rgb(25,25,25)" opacity="0.600"/><rect x="123" y="122" width="8" height="8" fill="rgb(28,28,28)" opacity="0.600"/><rect x="97" y="96" width="8" height="8" fill="rgb(59,59,59)" opacity="0.600"/><rect x="152" y="123" width="10" height="10" fill="rgb(20,20,20)" opacity="0.600"/><rect x="197" y="131" width="8" height="8" fill="rgb(14,14,14)" opacity="0.600"/><rect x="156" y="93" width="10" height="10" fill="rgb(43,43,43)" opacity="0.600"/><rect x="143" y="87" width="9" height="9" fill="rgb(48,48,48)" opacity="0.600"/><rect x="70" y="81" width="10" height="10" fill="rgb(70,70,70)" opacity="0.600"/><rect x="65" y="81" width="11" height="11" fill="rgb(50,50,50)" opacity="0.600"/><rect x="166" y="178" width="11" height="11" fill="rgb(30,30,30)" opacity="0.600"/><rect x="99" y="163" width="12" height="12" fill="rgb(55,55,55)" opacity="0.600"/><rect x="95" y="76" width="10" height="10" fill="rgb(60,60,60)" opacity="0.600"/><rect x="90" y="197" width="12" height="12" fill="rgb(61,61,61)" opacity="0.600"/><rect x="12" y="62" width="9" height="9" fill="rgb(59,59,59)" opacity="0.600"/><rect x="38" y="146" width="12" height="12" fill="rgb(38,38,38)" opacity="0.600"/><rect x="97" y="151" width="11" height="11" fill="rgb(43,43,43)" opacity="0.600"/><rect x="172" y="64" width="9" height="9" fill="rgb(50,50,50)" opacity="0.600"/><rect x="96" y="74" width="11" height="11" fill="rgb(59,59,59)" opacity="0.600"/><rect x="13" y="198" width="11" height="11" fill="rgb(67,67,67)" opacity="0.600"/><rect x="80" y="198" width="11" height="11" fill="rgb(48,48,48)" opacity="0.600"/><rect x="206" y="49" width="10" height="10" fill="rgb(67,67,67)" opacity="0.600"/><rect x="166" y="69" width="11" height="11" fill="rgb(68,68,68)" opacity="0.600"/><rect x="134" y="102" width="10" height="10" fill="rgb(14,14,14)" opacity="0.600"/><rect x="164" y="163" width="8" height="8" fill="rgb(46,46,46)" opacity="0.600"/><rect x="87" y="186" width="11" height="11" fill="rgb(51,51,51)" opacity="0.600"/><rect x="1" y="79" width="10" height="10" fill="rgb(75,75,75)" opacity="0.600"/><rect x="64" y="133" width="11" height="11" fill="rgb(41,41,41)" opacity="0.600"/><rect x="188" y="102" width="9" height="9" fill="rgb(71,71,71)" opacity="0.600"/><rect x="84" y="194" width="10" height="10" fill="rgb(72,72,72)" opacity="0.600"/><rect x="27" y="128" width="11" height="11" fill="rgb(49,49,49)" opacity="0.600"/><rect x="124" y="171" width="8" height="8" fill="rgb(33,33,33)" opacity="0.600"/><rect x="149" y="135" width="9" height="9" fill="rgb(31,31,31)" opacity="0.600"/><rect x="97" y="171" width="11" height="11" fill="rgb(41,41,41)" opacity="0.600"/><rect x="48" y="90" width="11" height="11" fill="rgb(70,70,70)" opacity="0.600"/><rect x="91" y="50" width="11" height="11" fill="rgb(42,42,42)" opacity="0.600"/><rect x="89" y="144" width="10" height="10" fill="rgb(70,70,70)" opacity="0.600"/><rect x="37" y="90" width="10" height="10" fill="rgb(68,68,68)" opacity="0.600"/><rect x="103" y="85" width="10" height="10" fill="rgb(54,54,54)" opacity="0.600"/><rect x="191" y="190" width="8" height="8" fill="rgb(27,27,27)" opacity="0.600"/><rect x="21" y="117" width="7" height="7" fill="rgb(53,53,53)" opacity="0.600"/><rect x="86" y="79" width="9" height="9" fill="rgb(45,45,45)" opacity="0.600"/><rect x="185" y="70" width="11" height="11" fill="rgb(61,61,61)" opacity="0.600"/><rect x="25" y="188" width="12" height="12" fill="rgb(52,52,52)" opacity="0.600"/><rect x="153" y="60" width="11" height="11" fill="rgb(48,48,48)" opacity="0.600"/><rect x="205" y="180" width="8" height="8" fill="rgb(30,30,30)" opacity="0.600"/><rect x="81" y="113" width="9" height="9" fill="rgb(43,43,43)" opacity="0.600"/><rect x="148" y="48" width="10" height="10" fill="rgb(66,66,66)" opacity="0.600"/><rect x="144" y="107" width="10" height="10" fill="rgb(16,16,16)" opacity="0.600"/><rect x="19" y="194" width="8" height="8" fill="rgb(44,44,44)" opacity="0.600"/><rect x="13" y="89" width="12" height="12" fill="rgb(49,49,49)" opacity="0.600"/><rect x="52" y="66" width="9" height="9" fill="rgb(54,54,54)" opacity="0.600"/><rect x="81" y="132" width="10" height="10" fill="rgb(69,69,69)" opacity="0.600"/><rect x="143" y="59" width="7" height="7" fill="rgb(49,49,49)" opacity="0.600"/><rect x="85" y="57" width="12" height="12" fill="rgb(78,78,78)" opacity="0.600"/><rect x="14" y="87" width="10" height="10" fill="rgb(52,52,52)" opacity="0.600"/><rect x="9" y="185" width="9" height="9" fill="rgb(59,59,59)" opacity="0.600"/><rect x="206" y="113" width="12" height="12" fill="rgb(40,40,40)" opacity="0.600"/><rect x="107" y="84" width="8" height="8" fill="rgb(48,48,48)" opacity="0.600"/><rect x="51" y="74" width="12" height="12" fill="rgb(78,78,78)" opacity="0.600"/><rect x="60" y="168" width="8" height="8" fill="rgb(70,70,70)" opacity="0.600"/><rect x="137" y="89" width="11" height="11" fill="rgb(54,54,54)" opacity="0.600"/><rect x="3" y="48" width="10" height="10" fill="rgb(50,50,50)" opacity="0.600"/><rect x="104" y="85" width="9" height="9" fill="rgb(65,65,65)" opacity="0.600"/><rect x="134" y="133" width="11" height="11" fill="rgb(57,57,57)" opacity="0.600"/><rect x="141" y="204" width="9" height="9" fill="rgb(78,78,78)" opacity="0.600"/><rect x="25" y="205" width="12" height="12" fill="rgb(46,46,46)" opacity="0.600"/><rect x="-2" y="146" width="11" height="11" fill="rgb(65,65,65)" opacity="0.600"/><rect x="30" y="59" width="11" height="11" fill="rgb(70,70,70)" opacity="0.600"/><rect x="137" y="91" width="8" height="8" fill="rgb(56,56,56)" opacity="0.600"/><rect x="5" y="75" width="8" height="8" fill="rgb(38,38,38)" opacity="0.600"/><rect x="51" y="201" width="12" height="12" fill="rgb(73,73,73)" opacity="0.600"/><rect x="64" y="51" width="11" height="11" fill="rgb(51,51,51)" opacity="0.600"/><rect x="71" y="45" width="9" height="9" fill="rgb(68,68,68)" opacity="0.600"/><rect x="54" y="151" width="8" height="8" fill="rgb(38,38,38)" opacity="0.600"/><rect x="14" y="177" width="8" height="8" fill="rgb(75,75,75)" opacity="0.600"/><rect x="4" y="49" width="9" height="9" fill="rgb(52,52,52)" opacity="0.600"/><rect x="13" y="200" width="11" height="11" fill="rgb(47,47,47)" opacity="0.600"/><rect x="134" y="161" width="11" height="11" fill="rgb(24,24,24)" opacity="0.600"/><rect x="148" y="125" width="8" height="8" fill="rgb(47,47,47)" opacity="0.600"/><rect x="4" y="180" width="11" height="11" fill="rgb(78,78,78)" opacity="0.600"/><rect x="86" y="159" width="10" height="10" fill="rgb(71,71,71)" opacity="0.600"/><rect x="155" y="137" width="11" height="11" fill="rgb(32,32,32)" opacity="0.600"/><rect x="164" y="160" width="12" height="12" fill="rgb(43,43,43)" opacity="0.600"/><rect x="2" y="67" width="9" height="9" fill="rgb(44,44,44)" opacity="0.600"/><rect x="75" y="118" width="7" height="7" fill="rgb(39,39,39)" opacity="0.600"/><rect x="128" y="155" width="9" height="9" fill="rgb(16,16,16)" opacity="0.600"/><rect x="154" y="126" width="10" height="10" fill="rgb(42,42,42)" opacity="0.600"/><rect x="153" y="122" width="11" height="11" fill="rgb(53,53,53)" opacity="0.600"/><rect x="150" y="78" width="11" height="11" fill="rgb(67,67,67)" opacity="0.600"/><rect x="100" y="107" width="9" height="9" fill="rgb(56,56,56)" opacity="0.600"/><rect x="158" y="145" width="10" height="10" fill="rgb(18,18,18)" opacity="0.600"/><rect x="65" y="151" width="10" height="10" fill="rgb(77,77,77)" opacity="0.600"/><rect x="115" y="47" width="7" height="7" fill="rgb(55,55,55)" opacity="0.600"/><rect x="201" y="61" width="8" height="8" fill="rgb(69,69,69)" opacity="0.600"/><rect x="57" y="129" width="9" height="9" fill="rgb(67,67,67)" opacity="0.600"/><rect x="158" y="206" width="10" height="10" fill="rgb(16,16,16)" opacity="0.600"/><rect x="193" y="48" width="9" height="9" fill="rgb(70,70,70)" opacity="0.600"/><rect x="200" y="118" width="8" height="8" fill="rgb(20,20,20)" opacity="0.600"/><rect x="11" y="60" width="11" height="11" fill="rgb(54,54,54)" opacity="0.600"/><rect x="197" y="66" width="11" height="11" fill="rgb(70,70,70)" opacity="0.600"/><rect x="54" y="63" width="9" height="9" fill="rgb(69,69,69)" opacity="0.600"/><rect x="185" y="124" width="7" height="7" fill="rgb(29,29,29)" opacity="0.600"/><rect x="139" y="111" width="11" height="11" fill="rgb(26,26,26)" opacity="0.600"/><rect x="62" y="181" width="7" height="7" fill="rgb(59,59,59)" opacity="0.600"/><rect x="173" y="64" width="12" height="12" fill="rgb(38,38,38)" opacity="0.600"/><rect x="186" y="92" width="9" height="9" fill="rgb(63,63,63)" opacity="0.600"/><rect x="78" y="186" width="7" height="7" fill="rgb(65,65,65)" opacity="0.600"/><rect x="155" y="183" width="8" height="8" fill="rgb(23,23,23)" opacity="0.600"/><rect x="130" y="69" width="12" height="12" fill="rgb(65,65,65)" opacity="0.600"/><rect x="103" y="76" width="9" height="9" fill="rgb(65,65,65)" opacity="0.600"/><rect x="182" y="177" width="10" height="10" fill="rgb(73,73,73)" opacity="0.600"/><rect x="111" y="162" width="7" height="7" fill="rgb(66,66,66)" opacity="0.600"/><rect x="125" y="67" width="11" height="11" fill="rgb(69,69,69)" opacity="0.600"/><rect x="5" y="195" width="8" height="8" fill="rgb(68,68,68)" opacity="0.600"/><rect x="83" y="91" width="8" height="8" fill="rgb(54,54,54)" opacity="0.600"/><rect x="81" y="84" width="9" height="9" fill="rgb(63,63,63)" opacity="0.600"/><rect x="20" y="149" width="7" height="7" fill="rgb(70,70,70)" opacity="0.600"/><rect x="187" y="126" width="8" height="8" fill="rgb(66,66,66)" opacity="0.600"/><rect x="86" y="134" width="8" height="8" fill="rgb(49,49,49)" opacity="0.600"/><rect x="67" y="60" width="8" height="8" fill="rgb(54,54,54)" opacity="0.600"/><rect x="167" y="78" width="7" height="7" fill="rgb(64,64,64)" opacity="0.600"/><rect x="76" y="166" width="8" height="8" fill="rgb(55,55,55)" opacity="0.600"/><rect x="67" y="55" width="8" height="8" fill="rgb(61,61,61)" opacity="0.600"/><rect x="22" y="127" width="10" height="10" fill="rgb(51,51,51)" opacity="0.600"/><rect x="15" y="190" width="9" height="9" fill="rgb(66,66,66)" opacity="0.600"/><rect x="87" y="96" width="11" height="11" fill="rgb(39,39,39)" opacity="0.600"/><rect x="22" y="114" width="11" height="11" fill="rgb(68,68,68)" opacity="0.600"/><rect x="200" y="124" width="7" height="7" fill="rgb(71,71,71)" opacity="0.600"/><rect x="176" y="203" width="8" height="8" fill="rgb(18,18,18)" opacity="0.600"/><rect x="27" y="202" width="8" height="8" fill="rgb(67,67,67)" opacity="0.600"/><rect x="13" y="171" width="7" height="7" fill="rgb(46,46,46)" opacity="0.600"/><rect x="44" y="194" width="10" height="10" fill="rgb(57,57,57)" opacity="0.600"/><rect x="199" y="146" width="10" height="10" fill="rgb(17,17,17)" opacity="0.600"/><rect x="16" y="94" width="12" height="12" fill="rgb(50,50,50)" opacity="0.600"/><rect x="77" y="81" width="10" height="10" fill="rgb(38,38,38)" opacity="0.600"/><rect x="109" y="206" width="8" height="8" fill="rgb(58,58,58)" opacity="0.600"/><rect x="132" y="188" width="9" height="9" fill="rgb(21,21,21)" opacity="0.600"/><rect x="1" y="112" width="10" height="10" fill="rgb(41,41,41)" opacity="0.600"/><rect x="-0" y="126" width="10" height="10" fill="rgb(64,64,64)" opacity="0.600"/><rect x="12" y="82" width="9" height="9" fill="rgb(61,61,61)" opacity="0.600"/><rect x="43" y="51" width="9" height="9" fill="rgb(64,64,64)" opacity="0.600"/><rect x="72" y="109" width="7" height="7" fill="rgb(56,56,56)" opacity="0.600"/><rect x="152" y="127" width="8" height="8" fill="rgb(57,57,57)" opacity="0.600"/><rect x="157" y="76" width="9" height="9" fill="rgb(54,54,54)" opacity="0.600"/><rect x="156" y="93" width="12" height="12" fill="rgb(69,69,69)" opacity="0.600"/><rect x="124" y="190" width="9" height="9" fill="rgb(41,41,41)" opacity="0.600"/><rect x="196" y="69" width="9" height="9" fill="rgb(51,51,51)" opacity="0.600"/><rect x="0" y="142" width="9" height="9" fill="rgb(41,41,41)" opacity="0.600"/><rect x="34" y="118" width="11" height="11" fill="rgb(58,58,58)" opacity="0.600"/><rect x="150" y="207" width="12" height="12" fill="rgb(19,19,19)" opacity="0.600"/><rect x="133" y="130" width="9" height="9" fill="rgb(26,26,26)" opacity="0.600"/><rect x="173" y="205" width="9" height="9" fill="rgb(16,16,16)" opacity="0.600"/><rect x="54" y="102" width="12" height="12" fill="rgb(45,45,45)" opacity="0.600"/><rect x="114" y="168" width="9" height="9" fill="rgb(57,57,57)" opacity="0.600"/><rect x="169" y="115" width="7" height="7" fill="rgb(25,25,25)" opacity="0.600"/><rect x="110" y="117" width="9" height="9" fill="rgb(68,68,68)" opacity="0.600"/><rect x="1" y="112" width="11" height="11" fill="rgb(63,63,63)" opacity="0.600"/><rect x="4" y="51" width="7" height="7" fill="rgb(41,41,41)" opacity="0.600"/><rect x="49" y="166" width="11" height="11" fill="rgb(59,59,59)" opacity="0.600"/><rect x="72" y="99" width="12" height="12" fill="rgb(40,40,40)" opacity="0.600"/><rect x="51" y="161" width="9" height="9" fill="rgb(55,55,55)" opacity="0.600"/><rect x="58" y="162" width="10" height="10" fill="rgb(78,78,78)" opacity="0.600"/><rect x="196" y="56" width="11" height="11" fill="rgb(44,44,44)" opacity="0.600"/><rect x="96" y="200" width="12" height="12" fill="rgb(62,62,62)" opacity="0.600"/><rect x="162" y="193" width="11" height="11" fill="rgb(29,29,29)" opacity="0.600"/><rect x="34" y="175" width="11" height="11" fill="rgb(47,47,47)" opacity="0.600"/><rect x="124" y="98" width="9" height="9" fill="rgb(61,61,61)" opacity="0.600"/><rect x="161" y="142" width="10" height="10" fill="rgb(19,19,19)" opacity="0.600"/><rect x="47" y="55" width="7" height="7" fill="rgb(73,73,73)" opacity="0.600"/><rect x="110" y="71" width="9" height="9" fill="rgb(44,44,44)" opacity="0.600"/><rect x="204" y="88" width="7" height="7" fill="rgb(44,44,44)" opacity="0.600"/><rect x="84" y="205" width="12" height="12" fill="rgb(49,49,49)" opacity="0.600"/><rect x="45" y="113" width="10" height="10" fill="rgb(53,53,53)" opacity="0.600"/><rect x="154" y="182" width="10" height="10" fill="rgb(23,23,23)" opacity="0.600"/><rect x="57" y="137" width="9" height="9" fill="rgb(54,54,54)" opacity="0.600"/><rect x="37" y="85" width="8" height="8" fill="rgb(47,47,47)" opacity="0.600"/><rect x="55" y="192" width="8" height="8" fill="rgb(42,42,42)" opacity="0.600"/><rect x="79" y="206" width="10" height="10" fill="rgb(52,52,52)" opacity="0.600"/><rect x="133" y="61" width="9" height="9" fill="rgb(40,40,40)" opacity="0.600"/><rect x="17" y="122" width="11" height="11" fill="rgb(66,66,66)" opacity="0.600"/><rect x="189" y="52" width="8" height="8" fill="rgb(45,45,45)" opacity="0.600"/><rect x="6" y="142" width="11" height="11" fill="rgb(50,50,50)" opacity="0.600"/><rect x="192" y="105" width="11" height="11" fill="rgb(22,22,22)" opacity="0.600"/><rect x="159" y="153" width="7" height="7" fill="rgb(77,77,77)" opacity="0.600"/><rect x="69" y="51" width="9" height="9" fill="rgb(40,40,40)" opacity="0.600"/><rect x="38" y="86" width="10" height="10" fill="rgb(51,51,51)" opacity="0.600"/><rect x="168" y="178" width="9" height="9" fill="rgb(33,33,33)" opacity="0.600"/><rect x="61" y="78" width="11" height="11" fill="rgb(73,73,73)" opacity="0.600"/><rect x="98" y="111" width="11" height="11" fill="rgb(73,73,73)" opacity="0.600"/><rect x="28" y="132" width="10" height="10" fill="rgb(63,63,63)" opacity="0.600"/><rect x="142" y="111" width="8" height="8" fill="rgb(15,15,15)" opacity="0.600"/><rect x="61" y="137" width="9" height="9" fill="rgb(64,64,64)" opacity="0.600"/><rect x="-1" y="169" width="11" height="11" fill="rgb(50,50,50)" opacity="0.600"/><rect x="78" y="111" width="12" height="12" fill="rgb(65,65,65)" opacity="0.600"/><rect x="186" y="114" width="11" height="11" fill="rgb(25,25,25)" opacity="0.600"/><rect x="93" y="71" width="7" height="7" fill="rgb(73,73,73)" opacity="0.600"/><rect x="25" y="176" width="9" height="9" fill="rgb(74,74,74)" opacity="0.600"/><rect x="127" y="105" width="10" height="10" fill="rgb(23,23,23)" opacity="0.600"/><rect x="29" y="73" width="7" height="7" fill="rgb(62,62,62)" opacity="0.600"/><rect x="99" y="175" width="12" height="12" fill="rgb(50,50,50)" opacity="0.600"/><rect x="59" y="181" width="7" height="7" fill="rgb(68,68,68)" opacity="0.600"/><rect x="62" y="143" width="10" height="10" fill="rgb(43,43,43)" opacity="0.600"/><rect x="187" y="145" width="11" height="11" fill="rgb(21,21,21)" opacity="0.600"/><rect x="127" y="145" width="8" height="8" fill="rgb(32,32,32)" opacity="0.600"/><rect x="41" y="110" width="10" height="10" fill="rgb(62,62,62)" opacity="0.600"/><rect x="71" y="69" width="12" height="12" fill="rgb(50,50,50)" opacity="0.600"/><rect x="4" y="136" width="11" height="11" fill="rgb(40,40,40)" opacity="0.600"/><rect x="137" y="98" width="9" height="9" fill="rgb(67,67,67)" opacity="0.600"/><rect x="112" y="147" width="9" height="9" fill="rgb(32,32,32)" opacity="0.600"/><rect x="48" y="108" width="9" height="9" fill="rgb(70,70,70)" opacity="0.600"/><rect x="88" y="49" width="10" height="10" fill="rgb(69,69,69)" opacity="0.600"/><rect x="94" y="117" width="10" height="10" fill="rgb(67,67,67)" opacity="0.600"/><rect x="172" y="176" width="9" height="9" fill="rgb(25,25,25)" opacity="0.600"/><rect x="86" y="60" width="9" height="9" fill="rgb(70,70,70)" opacity="0.600"/><rect x="134" y="52" width="8" height="8" fill="rgb(58,58,58)" opacity="0.600"/><rect x="160" y="128" width="7" height="7" fill="rgb(26,26,26)" opacity="0.600"/><rect x="133" y="172" width="7" height="7" fill="rgb(33,33,33)" opacity="0.600"/><rect x="150" y="177" width="8" height="8" fill="rgb(69,69,69)" opacity="0.600"/><rect x="56" y="176" width="11" height="11" fill="rgb(52,52,52)" opacity="0.600"/><rect x="9" y="102" width="11" height="11" fill="rgb(48,48,48)" opacity="0.600"/><rect x="64" y="144" width="12" height="12" fill="rgb(67,67,67)" opacity="0.600"/><rect x="25" y="126" width="12" height="12" fill="rgb(51,51,51)" opacity="0.600"/><rect x="120" y="145" width="8" height="8" fill="rgb(20,20,20)" opacity="0.600"/><rect x="34" y="71" width="12" height="12" fill="rgb(58,58,58)" opacity="0.600"/><rect x="185" y="72" width="11" height="11" fill="rgb(45,45,45)" opacity="0.600"/><rect x="158" y="53" width="11" height="11" fill="rgb(66,66,66)" opacity="0.600"/><rect x="113" y="139" width="11" height="11" fill="rgb(31,31,31)" opacity="0.600"/><rect x="129" y="109" width="11" height="11" fill="rgb(25,25,25)" opacity="0.600"/><rect x="117" y="103" width="11" height="11" fill="rgb(19,19,19)" opacity="0.600"/><rect x="125" y="200" width="8" height="8" fill="rgb(23,23,23)" opacity="0.600"/><rect x="131" y="204" width="10" height="10" fill="rgb(58,58,58)" opacity="0.600"/><rect x="150" y="166" width="8" height="8" fill="rgb(34,34,34)" opacity="0.600"/><rect x="87" y="128" width="11" height="11" fill="rgb(46,46,46)" opacity="0.600"/><rect x="99" y="144" width="7" height="7" fill="rgb(41,41,41)" opacity="0.600"/><rect x="-4" y="103" width="8" height="8" fill="rgb(60,60,60)" opacity="0.600"/><rect x="108" y="112" width="9" height="9" fill="rgb(46,46,46)" opacity="0.600"/><rect x="38" y="146" width="9" height="9" fill="rgb(46,46,46)" opacity="0.600"/><rect x="-2" y="175" width="11" height="11" fill="rgb(66,66,66)" opacity="0.600"/><rect x="15" y="148" width="11" height="11" fill="rgb(55,55,55)" opacity="0.600"/><rect x="80" y="88" width="7" height="7" fill="rgb(73,73,73)" opacity="0.600"/><rect x="184" y="141" width="10" height="10" fill="rgb(71,71,71)" opacity="0.600"/><rect x="151" y="85" width="12" height="12" fill="rgb(40,40,40)" opacity="0.600"/><rect x="8" y="49" width="8" height="8" fill="rgb(48,48,48)" opacity="0.600"/><rect x="7" y="171" width="7" height="7" fill="rgb(73,73,73)" opacity="0.600"/><rect x="134" y="77" width="9" height="9" fill="rgb(71,71,71)" opacity="0.600"/><rect x="124" y="127" width="10" height="10" fill="rgb(49,49,49)" opacity="0.600"/><rect x="103" y="55" width="10" height="10" fill="rgb(68,68,68)" opacity="0.600"/><rect x="147" y="46" width="11" height="11" fill="rgb(67,67,67)" opacity="0.600"/><rect x="12" y="151" width="8" height="8" fill="rgb(44,44,44)" opacity="0.600"/><rect x="50" y="149" width="8" height="8" fill="rgb(54,54,54)" opacity="0.600"/><rect x="146" y="88" width="10" height="10" fill="rgb(65,65,65)" opacity="0.600"/><rect x="140" y="194" width="12" height="12" fill="rgb(20,20,20)" opacity="0.600"/><rect x="13" y="127" width="8" height="8" fill="rgb(53,53,53)" opacity="0.600"/><rect x="173" y="78" width="8" height="8" fill="rgb(58,58,58)" opacity="0.600"/><rect x="36" y="108" width="10" height="10" fill="rgb(62,62,62)" opacity="0.600"/><rect x="187" y="147" width="10" height="10" fill="rgb(72,72,72)" opacity="0.600"/><rect x="95" y="181" width="10" height="10" fill="rgb(39,39,39)" opacity="0.600"/><rect x="88" y="162" width="10" height="10" fill="rgb(57,57,57)" opacity="0.600"/><rect x="162" y="108" width="10" height="10" fill="rgb(48,48,48)" opacity="0.600"/><rect x="26" y="49" width="8" height="8" fill="rgb(48,48,48)" opacity="0.600"/><rect x="68" y="68" width="7" height="7" fill="rgb(40,40,40)" opacity="0.600"/><rect x="24" y="149" width="7" height="7" fill="rgb(42,42,42)" opacity="0.600"/><rect x="151" y="56" width="10" height="10" fill="rgb(61,61,61)" opacity="0.600"/><rect x="37" y="200" width="10" height="10" fill="rgb(42,42,42)" opacity="0.600"/><rect x="181" y="167" width="11" height="11" fill="rgb(21,21,21)" opacity="0.600"/><rect x="39" y="63" width="7" height="7" fill="rgb(78,78,78)" opacity="0.600"/><rect x="14" y="167" width="10" height="10" fill="rgb(68,68,68)" opacity="0.600"/>
<path d="M13 -5H215V14L205 18L190 28L165 45L150 55L130 68L115 77L105 75L95 60L80 55L60 55L45 62L30 66L10 63L2 55L12 45L15 30Z" fill="#000" filter="url(#pb2)"/><path d="M16 -5H215V8L195 18L165 38L130 60L112 68L100 55L80 48L55 50L30 58L14 56L18 30Z" fill="#000"/>
<path d="M-3 -3H13L16 25L12 45L2 55H-3Z" fill="#a8a8a8"/><path d="M2 5L10 3L12 30L4 40Z" fill="#7e7e7e"/>
<path d="M-3 62L14 66L24 70L16 86L-3 96Z" fill="#c4c4c4"/><path d="M16 66L26 70L24 80L17 78Z" fill="#111"/>
<path d="M-3 150L8 152L18 160L12 168L-3 166Z" fill="#181818"/>
<path d="M-3 164L14 166L26 182L42 210H-3Z" fill="#dedede"/><path d="M2 180L20 186L26 196L4 192Z" fill="#b8b8b8"/>
</g></g></svg>
<div class="a" style="left:677px;top:89px;width:54px;height:27px;border:2px solid #cdcdcd;border-radius:14px"></div>
<span class="t" style="left:692px;top:96px;font-size:12px;color:#f0f0f0">确定</span>
<div class="a" style="left:677px;top:124px;width:54px;height:27px;border:2px solid #9c9c9c;border-radius:14px"></div>
<span class="t" style="left:692px;top:131px;font-size:12px;color:#f0f0f0">复位</span>
<div class="a" style="left:677px;top:168px;width:13px;height:13px;background:#dcdcdc;border-radius:2px"></div>
<svg class="a" style="left:677px;top:168px" width="13" height="13" viewBox="0 0 13 13"><path d="M3 6.500L5.500 9.200L10 3.500" fill="none" stroke="#2a2a2a" stroke-width="1.800"/></svg>
<span class="t" style="left:698px;top:169px;font-size:12px;color:#e8e8e8">预览(P)</span>
<svg class="a" style="left:496px;top:304px" width="16" height="16" viewBox="0 0 16 16"><circle cx="6.500" cy="6.500" r="4.600" fill="none" stroke="#d0d0d0" stroke-width="1.300"/><path d="M10 10L14 14" stroke="#d0d0d0" stroke-width="2"/><path d="M4.300 6.500H8.700" stroke="#d0d0d0" stroke-width="1.200"/></svg>
<span class="t" style="left:542px;top:306px;font-size:12px;color:#b4b4b4">100%</span>
<svg class="a" style="left:604px;top:304px" width="16" height="16" viewBox="0 0 16 16"><circle cx="6.500" cy="6.500" r="4.600" fill="none" stroke="#d0d0d0" stroke-width="1.300"/><path d="M10 10L14 14" stroke="#d0d0d0" stroke-width="2"/><path d="M4.300 6.500H8.700M6.500 4.300V8.700" stroke="#d0d0d0" stroke-width="1.200"/></svg>
<div class="a" style="left:448px;top:326px;width:240px;height:101px;border:3px solid #e6383b"></div>
<span class="t" style="left:468px;top:341px;font-size:12px;color:#c8c8c8">半径(R):</span>
<div class="a" style="left:521px;top:338px;width:56px;height:19px;border:1px solid #2f6fbf;background:#262626"></div>
<div class="a" style="left:523px;top:340px;width:9px;height:15px;background:#3c78c8"></div>
<span class="t" style="left:524px;top:341px;font-size:12px;color:#fff">2</span>
<span class="t" style="left:588px;top:341px;font-size:12px;color:#c8c8c8">像素</span>
<div class="a" style="left:462px;top:368px;width:193px;height:3px;background:#585858"></div>
<svg class="a" style="left:456px;top:371px" width="12" height="12" viewBox="0 0 12 12"><path d="M6 1L10.500 6.500V9.500Q10.500 10.500 9.500 10.500H2.500Q1.500 10.500 1.500 9.500V6.500Z" fill="#f2f2f2"/></svg>
<span class="t" style="left:485px;top:402px;font-size:12px;color:#c8c8c8">保留:</span>
<div class="a" style="left:520px;top:398px;width:59px;height:20px;border:1px solid #464646;border-radius:3px;background:#2c2c2c"></div>
<span class="t" style="left:529px;top:402px;font-size:12px;color:#f0f0f0">方形</span>
<svg class="a" style="left:566px;top:405px" width="9" height="7" viewBox="0 0 9 7"><path d="M1 1.500L4.500 5L8 1.500" fill="none" stroke="#c0c0c0" stroke-width="1.100"/></svg>
</div>
<!--WATERMARK-->
<span class="t" id="wm" style="left:829px;top:982px;font-size:39px;word-spacing:3px;font-weight:500;color:#e6e6e6;font-family:'Noto Sans CJK SC','Liberation Sans',sans-serif;text-shadow:1.500px 2px 0 #2e2e2e,2px 2.500px 1px rgba(20,20,20,.600)">头条号 / 心灵制作</span>
</body>
</html>
